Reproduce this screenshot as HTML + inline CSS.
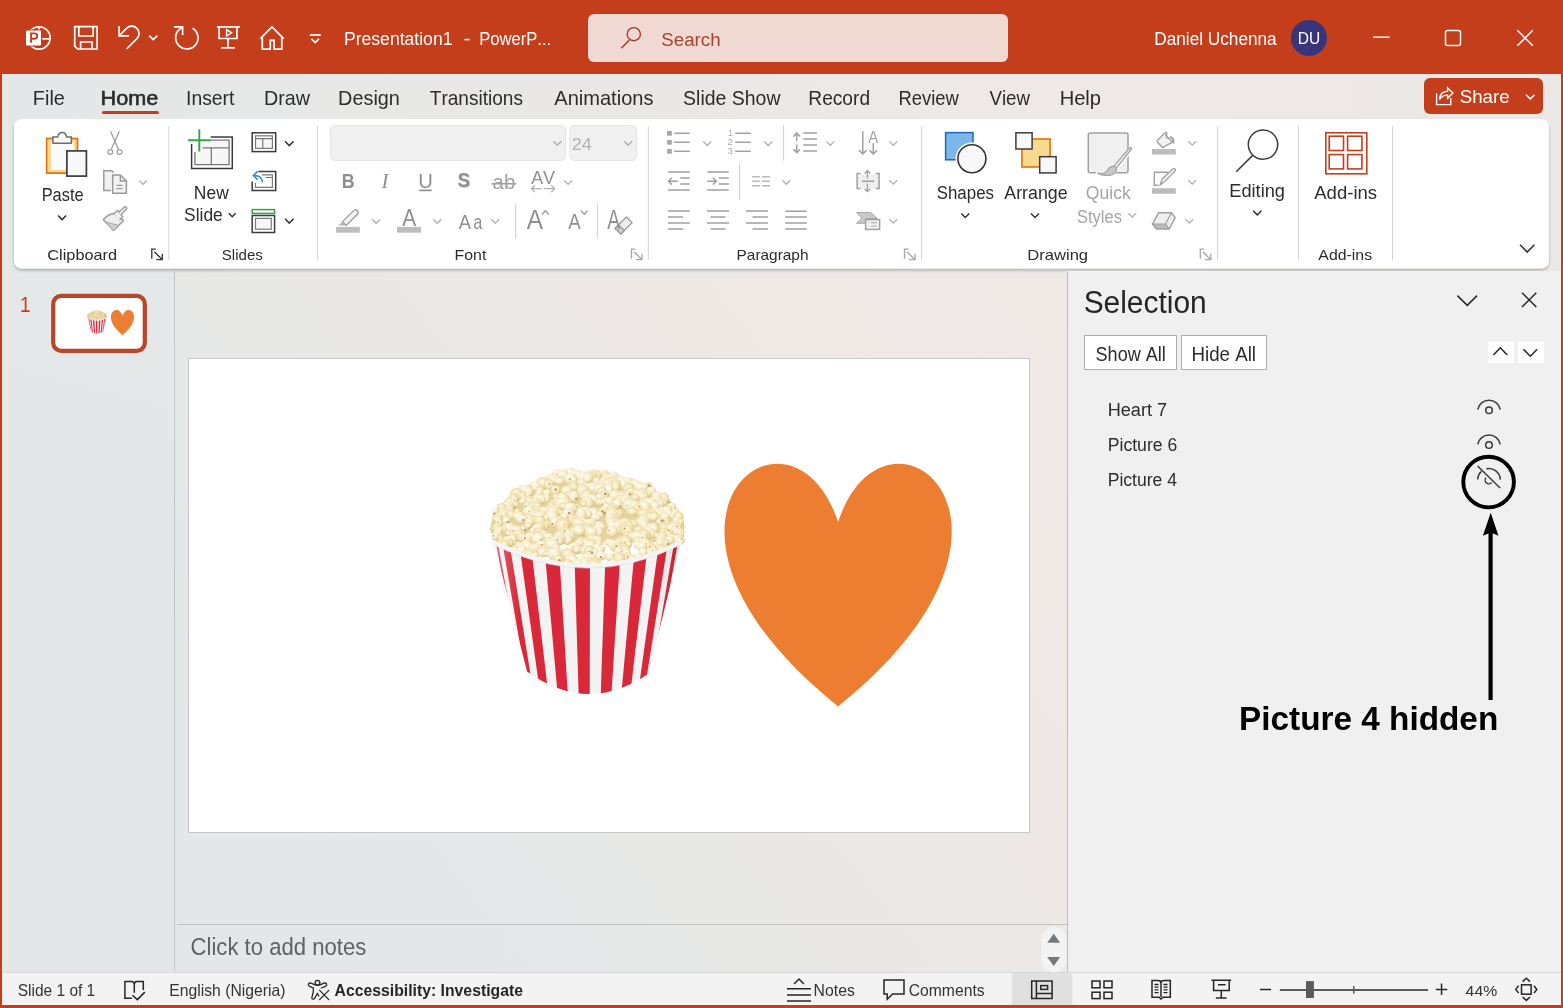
<!DOCTYPE html>
<html><head><meta charset="utf-8"><title>PowerPoint</title>
<style>
html,body{margin:0;padding:0;width:1563px;height:1008px;overflow:hidden;background:#C43E1C}
svg{position:absolute;left:0;top:0;display:block;will-change:transform}
text{font-family:"Liberation Sans",sans-serif;font-kerning:none;white-space:pre}
</style></head><body>
<svg width="1563" height="1008" viewBox="0 0 1563 1008">
<defs>
<linearGradient id="mica" gradientUnits="userSpaceOnUse" x1="176" y1="972" x2="1068" y2="272">
 <stop offset="0" stop-color="#E3E7E8"/><stop offset="0.3" stop-color="#E5E8E8"/><stop offset="0.5" stop-color="#EAE8E5"/><stop offset="0.7" stop-color="#EEE8E5"/><stop offset="1" stop-color="#F1E9E7"/>
</linearGradient>
<linearGradient id="micaL" gradientUnits="userSpaceOnUse" x1="0" y1="972" x2="174" y2="272">
 <stop offset="0" stop-color="#E3E7E8"/><stop offset="1" stop-color="#E5E8E8"/>
</linearGradient>
<linearGradient id="micaT" gradientUnits="userSpaceOnUse" x1="0" y1="0" x2="1563" y2="0">
 <stop offset="0" stop-color="#E4E7E8"/><stop offset="0.35" stop-color="#E9E8E6"/><stop offset="0.7" stop-color="#EEE9E6"/><stop offset="1" stop-color="#ECE8E5"/>
</linearGradient>
<filter id="rshadow" x="-2%" y="-10%" width="104%" height="125%">
 <feGaussianBlur in="SourceAlpha" stdDeviation="1.5"/><feOffset dy="1.5"/>
 <feComponentTransfer><feFuncA type="linear" slope="0.25"/></feComponentTransfer>
 <feMerge><feMergeNode/><feMergeNode in="SourceGraphic"/></feMerge>
</filter>
</defs>
<rect x="0" y="0" width="1563" height="1008" fill="#C43E1C"/>
<rect x="2" y="74" width="1559" height="200" fill="url(#micaT)"/>
<rect x="2" y="271" width="173" height="702" fill="url(#micaL)"/>
<rect x="175" y="271" width="893" height="702" fill="url(#mica)"/>
<rect x="14" y="119" width="1535" height="149.5" rx="8" fill="#FFFFFF" filter="url(#rshadow)"/>
<rect x="1068" y="271" width="493" height="701" fill="#F0F0F0"/>
<line x1="1067.5" y1="272" x2="1067.5" y2="972" stroke="#BDBDBD" stroke-width="1"/>
<line x1="174.5" y1="271" x2="174.5" y2="971" stroke="#C4C4C4" stroke-width="1"/>
<line x1="177" y1="924.5" x2="1067" y2="924.5" stroke="#C0C0C0" stroke-width="1"/>
<rect x="188.5" y="358.5" width="841" height="474" fill="#FFFFFF" stroke="#C8C8C8" stroke-width="1"/>
<rect x="2" y="973" width="1559" height="32" fill="#F3F3F3"/>
<line x1="2" y1="972.5" x2="1561" y2="972.5" stroke="#D9D9D9" stroke-width="1"/>
<g fill="none" stroke="#FFFFFF" stroke-width="1.6" stroke-linecap="butt" stroke-linejoin="miter">
<circle cx="39" cy="37.9" r="11.2"/>
<line x1="38.9" y1="27" x2="38.9" y2="31"/><line x1="41" y1="38.85" x2="49.5" y2="38.85"/>
</g>
<rect x="25.2" y="29.6" width="17" height="17" rx="1.5" fill="#C43E1C"/>
<rect x="26" y="30.4" width="15" height="15.2" rx="1" fill="#FFFFFF"/>
<path d="M31.1 42.7 V33.4 H34.3 Q37.2 33.4 37.2 36 Q37.2 38.8 34.3 38.8 H31.1" fill="none" stroke="#C43E1C" stroke-width="1.9"/>
<g fill="none" stroke="#FFFFFF" stroke-width="1.7" stroke-linecap="butt" stroke-linejoin="miter">
<path d="M74.7 26.7 H97.1 V49 H77.6 L74.7 46.1 Z"/>
<path d="M78.8 26.7 V36 H93.1 V26.7"/>
<path d="M80.6 49 V42 H92 V49"/>
<path d="M119.1 26 V35.8 H129"/>
<path d="M119.4 35.5 L126.5 28.3 A7.3 7.3 0 0 1 136.9 38.7 L126.6 49"/>
<path d="M149.2 35.6 L153.2 39.6 L157.2 35.6"/>
<path d="M192.6 28.2 A11.2 11.2 0 1 1 178.6 30.2 L182.3 27.1"/>
<path d="M173.9 26.8 H182.6 V35"/>
<path d="M216.9 26.9 H239.9"/><path d="M219.1 26.9 V38.5 H236.9 V26.9"/><path d="M228 38.5 V47.6"/><path d="M221.1 47.8 H235"/>
<path d="M226.6 29.6 V36 L231.6 32.8 Z" stroke-width="1.4"/>
<path d="M260.3 38.6 L272 26.9 L283.7 38.6"/><path d="M262.3 37 V49.1 H270.3 V40.4 H274.1 V49.1 H281.8 V37"/>
<path d="M309.8 35 H320.9"/><path d="M311.4 38.9 L315.2 42.6 L319 38.9"/>
</g>
<rect x="588" y="14" width="420" height="48" rx="6" fill="#F0D9D3"/>
<g fill="none" stroke="#A63B20" stroke-width="1.4"><circle cx="633.8" cy="34.2" r="6.6"/><path d="M629.3 39.9 L621.3 48.3"/></g>
<circle cx="1309" cy="38" r="18" fill="#39357A"/>
<g fill="none" stroke="#FFFFFF" stroke-width="1.5"><path d="M1373 37.2 H1389.5"/><rect x="1445.5" y="30.6" width="15" height="15" rx="2"/><path d="M1517.3 30.3 L1532.8 45.8 M1532.8 30.3 L1517.3 45.8"/></g>
<rect x="1424" y="78" width="119" height="36" rx="6" fill="#C43E1C"/>
<g fill="none" stroke="#FFFFFF" stroke-width="1.4" stroke-linejoin="miter"><path d="M1436.6 93.5 V104.6 H1450.7 V98"/><path d="M1439.6 99.5 Q1440 91.5 1447.6 91.3 V87.8 L1452.9 93 L1447.6 98.3 V95.1 Q1442.5 94.8 1439.6 99.5 Z"/><path d="M1526 94.7 L1530.3 98.9 L1534.6 94.7" stroke-width="1.5"/></g>
<rect x="49.3" y="140.2" width="26.4" height="31.2" fill="#FAFAFA" stroke="#F8D88C" stroke-width="3.2"/>
<rect x="46.7" y="138.5" width="30.8" height="34.6" fill="none" stroke="#E0720E" stroke-width="1.7"/>
<path d="M52.9 136.9 H57.7 Q58.6 132.4 62.2 132.4 Q65.8 132.4 66.7 136.9 H71.3 V143.3 H52.9 Z" fill="#FAFAFA" stroke="#6E6E6E" stroke-width="1.5"/>
<rect x="66.9" y="150.9" width="19.5" height="25.2" fill="#F8F8F8" stroke="#3C3C3C" stroke-width="1.7"/>
<path d="M58 215.5 L62.1 219.6 L66.2 215.5" fill="none" stroke="#333" stroke-width="1.5"/>
<g fill="none" stroke="#A0A0A0" stroke-width="1.3"><path d="M110.6 131.3 L118.3 149.2 M119.3 131.3 L111.3 149.2"/><circle cx="110.3" cy="152" r="2.4"/><circle cx="119.5" cy="152" r="2.4"/></g>
<g fill="#F2F2F2" stroke="#9A9A9A" stroke-width="1.5"><path d="M111 190.4 H103.8 V170.7 H111.5 L113.6 172.4" fill="#F2F2F2"/><path d="M112.7 175 H120.4 L126.4 181 V193.2 H112.7 Z"/><path d="M120.4 175 V181 H126.4" fill="none"/><path d="M116.4 185.4 H122.6 M116.4 188.6 H122.6" stroke-width="1.2"/></g>
<path d="M139.3 180.5 L143.1 184.3 L146.9 180.5" fill="none" stroke="#B3B3B3" stroke-width="1.3"/>
<g stroke="#9A9A9A" stroke-width="1.4" stroke-linejoin="round"><path d="M103.3 219.5 Q108 214.5 113.4 213.5 L123.6 220.4 L113.5 230.6 Z" fill="#EFEFEF"/><path d="M105.5 222 L118.6 225.3 L113.5 230.6 Z" fill="#D0D0D0" stroke-width="0.8"/><path d="M113.8 213.8 L117.4 210.4 L122.8 216.6 L119.6 220" fill="#EFEFEF"/><path d="M118.5 212.5 L124.5 206.9 Q126.4 206.3 126.8 208.5 L121 214.7" fill="#F5F5F5"/></g>
<g fill="none" stroke="#333" stroke-width="1.3"><path d="M151.8 258.7 V249.2 H155.8"/><path d="M154.3 251.7 L162.3 259.7 M156.3 259.7 H162.3 V253.7"/></g>
<g fill="none" stroke="#A6A6A6" stroke-width="1.3"><path d="M631.5 258.7 V249.2 H635.5"/><path d="M634.0 251.7 L642.0 259.7 M636.0 259.7 H642.0 V253.7"/></g>
<g fill="none" stroke="#A6A6A6" stroke-width="1.3"><path d="M904.5 258.7 V249.2 H908.5"/><path d="M907.0 251.7 L915.0 259.7 M909.0 259.7 H915.0 V253.7"/></g>
<g fill="none" stroke="#A6A6A6" stroke-width="1.3"><path d="M1200.3 258.7 V249.2 H1204.3"/><path d="M1202.8 251.7 L1210.8 259.7 M1204.8 259.7 H1210.8 V253.7"/></g>
<line x1="168.8" y1="126" x2="168.8" y2="260" stroke="#D4D4D4" stroke-width="1"/>
<line x1="317.3" y1="126" x2="317.3" y2="260" stroke="#D4D4D4" stroke-width="1"/>
<line x1="648.3" y1="126" x2="648.3" y2="260" stroke="#D4D4D4" stroke-width="1"/>
<line x1="921.6" y1="126" x2="921.6" y2="260" stroke="#D4D4D4" stroke-width="1"/>
<line x1="1217.6" y1="126" x2="1217.6" y2="260" stroke="#D4D4D4" stroke-width="1"/>
<line x1="1298.5" y1="126" x2="1298.5" y2="260" stroke="#D4D4D4" stroke-width="1"/>
<line x1="1392.5" y1="126" x2="1392.5" y2="260" stroke="#D4D4D4" stroke-width="1"/>
<g fill="none" stroke-linejoin="miter">
<rect x="194.9" y="140.2" width="34.2" height="24.5" fill="#F7F7F7" stroke="none"/>
<path d="M210.7 136.9 H232.3 V168.6 H191.6 V144" stroke="#3C3C3C" stroke-width="1.5"/>
<path d="M210.7 140.2 H229.1 V164.7 H194.9 V152 M202.6 147.8 H229.1 M211.3 147.8 V164.7" stroke="#7A7A7A" stroke-width="1.3"/>
<path d="M199.3 129.3 V151.6 M188.1 140.2 H210.7" stroke="#3AA04C" stroke-width="1.9"/>
<rect x="252.2" y="132.8" width="23.5" height="18.8" stroke="#3C3C3C" stroke-width="1.5"/>
<rect x="255.5" y="135.8" width="16.9" height="12.6" fill="#F7F7F7" stroke="#7A7A7A" stroke-width="1.2"/><path d="M255.5 138.6 H272.4 M262.8 138.6 V148.4" stroke="#7A7A7A" stroke-width="1.2"/>
<path d="M258.5 171.6 H275.7 V190.4 H252.2 V181.5" stroke="#3C3C3C" stroke-width="1.5"/>
<path d="M262 174.8 H272.4 V187.4 H255.5 V183 M265.5 177.5 H272.4" stroke="#7A7A7A" stroke-width="1.2"/>
<path d="M262.5 182.5 Q262.3 175.6 254 175.5 M257.8 171.2 L253.4 175.5 L257.6 179.8" stroke="#2E8FD6" stroke-width="1.6"/>
<rect x="252.2" y="209.6" width="22.4" height="3.8" stroke="#3AA04C" stroke-width="1.5"/>
<path d="M252.2 215.5 H274.6 V232.4 H252.2 Z" stroke="#3C3C3C" stroke-width="1.5"/>
<rect x="255.5" y="218.4" width="15.8" height="10.8" fill="#F7F7F7" stroke="#7A7A7A" stroke-width="1.2"/>
<g stroke="#333" stroke-width="1.5"><path d="M285 141.3 L289.3 145.6 L293.6 141.3"/><path d="M285 218.8 L289.3 223.1 L293.6 218.8"/><path d="M228.8 213.3 L232.2 216.7 L235.7 213.3"/></g>
</g>
<rect x="330.5" y="125.5" width="235" height="35" rx="5" fill="#F0F0F0" stroke="#E3E3E3" stroke-width="1"/>
<rect x="569.8" y="125.5" width="67" height="35" rx="5" fill="#F0F0F0" stroke="#E3E3E3" stroke-width="1"/>
<path d="M553.3 141.2 L557.3 145.2 L561.3 141.2" fill="none" stroke="#A6A6A6" stroke-width="1.3"/>
<path d="M624.2 141.2 L628.2 145.2 L632.2 141.2" fill="none" stroke="#A6A6A6" stroke-width="1.3"/>
<g fill="#8F8F8F" style="font-family:'Liberation Sans'">
</g>
<path d="M419.2 190.4 H431.8" stroke="#8F8F8F" stroke-width="1.6"/>
<path d="M491.5 183.8 H516.2" stroke="#8F8F8F" stroke-width="1.3"/>
<g fill="none" stroke="#B0B0B0" stroke-width="1.3"><path d="M531.5 188.7 H541.6 M534.8 185.3 L531.5 188.7 L534.8 192.1"/><path d="M544.1 188.7 H554.6 M551.3 185.3 L554.6 188.7 L551.3 192.1"/></g>
<path d="M564.2 180.4 L568.2 184.4 L572.2 180.4" fill="none" stroke="#B0B0B0" stroke-width="1.3"/>
<rect x="336.1" y="226.9" width="23.7" height="5.8" fill="#BDBDBD"/>
<path d="M342.5 221.6 L353.3 210.9 Q355.5 208.7 357.3 210.6 Q359.2 212.6 357 214.8 L346.3 225.4 Z" fill="#F2F2F2" stroke="#9A9A9A" stroke-width="1.3"/>
<path d="M342.5 221.6 L346.3 225.4 L343.4 225.6 L338.3 225.6 Z" fill="#B5B5B5"/>
<path d="M372.2 219.3 L376.2 223.3 L380.2 219.3" fill="none" stroke="#B0B0B0" stroke-width="1.3"/>
<rect x="397" y="226.9" width="24" height="5.8" fill="#BDBDBD"/>
<path d="M433.3 219.3 L437.3 223.3 L441.3 219.3" fill="none" stroke="#B0B0B0" stroke-width="1.3"/>
<path d="M491.3 219.3 L495.3 223.3 L499.3 219.3" fill="none" stroke="#B0B0B0" stroke-width="1.3"/>
<line x1="515.7" y1="203.3" x2="515.7" y2="238.6" stroke="#D0D0D0" stroke-width="1"/>
<line x1="597.4" y1="203.3" x2="597.4" y2="238.6" stroke="#D0D0D0" stroke-width="1"/>
<g fill="none" stroke="#9A9A9A" stroke-width="1.3"><path d="M541.9 214.5 L545.3 210.8 L548.7 214.5"/><path d="M580.9 210.6 L584.3 214.3 L587.7 210.6"/></g>
<g transform="translate(623.6 225.5) rotate(-45)"><rect x="-8" y="-4" width="16" height="8" fill="#EDEDED" stroke="#A0A0A0" stroke-width="1.4"/><rect x="-8" y="-4" width="5" height="8" fill="#CFCFCF" stroke="#A0A0A0" stroke-width="1.4"/></g>
<g fill="none" stroke="#A0A0A0" stroke-width="1.5">
<rect x="667.1" y="131.0" width="4.7" height="4.7" fill="#A6A6A6" stroke="none"/><path d="M674.2 133.3 H689.8"/>
<rect x="667.1" y="140.0" width="4.7" height="4.7" fill="#A6A6A6" stroke="none"/><path d="M674.2 142.3 H689.8"/>
<rect x="667.1" y="149.0" width="4.7" height="4.7" fill="#A6A6A6" stroke="none"/><path d="M674.2 151.3 H689.8"/>
<path d="M703.3 141.5 L707.3 145.5 L711.3 141.5" fill="none" stroke="#B0B0B0" stroke-width="1.3"/>
<path d="M735.2 133.3 H750.8"/>
<path d="M735.2 142.3 H750.8"/>
<path d="M735.2 151.3 H750.8"/>
<path d="M764.2 141.5 L768.2 145.5 L772.2 141.5" fill="none" stroke="#B0B0B0" stroke-width="1.3"/>
<line x1="783.6" y1="125" x2="783.6" y2="160.7" stroke="#D0D0D0" stroke-width="1"/>
<path d="M796.7 133.5 V141.2 M793.4 136.6 L796.7 133.2 L800 136.6 M796.7 144.6 V152.4 M793.4 149.2 L796.7 152.6 L800 149.2"/>
<path d="M803.3 133.1 H816.9 M803.3 139.1 H816.9 M803.3 145.1 H816.9 M803.3 151 H816.9"/>
<path d="M826.4 141.4 L830.3 145.3 L834.1999999999999 141.4" fill="none" stroke="#B0B0B0" stroke-width="1.3"/>
<path d="M862.8 131.2 V154 M858.9 150.1 L862.8 154 L866.7 150.1 M873.3 143 V154 M869.6 150.4 L873.3 154 L877 150.4"/>
<path d="M889.4 141.4 L893.3 145.3 L897.1999999999999 141.4" fill="none" stroke="#B0B0B0" stroke-width="1.3"/>
<path d="M668 172.1 H689.8 M680.3 178.1 H689.8 M680.3 184.1 H689.8 M668 190 H689.8 M668.6 181.2 H677.7 M671.9 177.8 L668.5 181.2 L671.9 184.6"/>
<path d="M707.2 172.1 H728.7 M718.7 178.1 H728.7 M718.7 184.1 H728.7 M707.2 190 H728.7 M707.2 181.2 H716.3 M712.9 177.8 L716.3 181.2 L712.9 184.6"/>
<line x1="739.5" y1="164" x2="739.5" y2="200" stroke="#D0D0D0" stroke-width="1"/>
<path d="M752.1 176.8 H759.8 M762.1 176.8 H770 M752.1 181.2 H759.8 M762.1 181.2 H770 M752.1 185.8 H759.8 M762.1 185.8 H770" stroke="#B8B8B8"/>
<path d="M782.3 180.3 L786.3 184.3 L790.3 180.3" fill="none" stroke="#B0B0B0" stroke-width="1.3"/>
<rect x="857.5" y="174.5" width="21.5" height="14" fill="#EFEFEF" stroke="none"/>
<path d="M860.5 173.5 H857.1 V188.6 H860.5 M875.7 173.5 H879.1 V188.6 H875.7 M862 181.2 H874"/>
<path d="M867.4 170.8 V178.5 M864.6 173.5 L867.4 170.7 L870.2 173.5 M867.4 183.5 V191.5 M864.6 188.8 L867.4 191.6 L870.2 188.8" stroke-width="1.3"/>
<path d="M889.4 180.3 L893.3 184.20000000000002 L897.1999999999999 180.3" fill="none" stroke="#B0B0B0" stroke-width="1.3"/>
<path d="M667.8 211 H689.8 M667.8 217 H683 M667.8 223 H689.8 M667.8 229 H683"/>
<path d="M707 211 H729 M710.5 217 H725.5 M707 223 H729 M710.5 229 H725.5"/>
<path d="M746 211 H768 M752.5 217 H768 M746 223 H768 M752.5 229 H768"/>
<path d="M785.3 211.2 H806.7 M785.3 217.1 H806.7 M785.3 223.1 H806.7 M785.3 229 H806.7"/>
<path d="M856.5 212.5 H870.5 L877.5 218.5 H866 V223.3 H856.5 L862 218 Z" fill="#C9C9C9" stroke="#A8A8A8" stroke-width="1"/>
<rect x="865.6" y="219.6" width="14" height="9.8" fill="#F5F5F5" stroke="#A0A0A0" stroke-width="1.5"/>
<path d="M868.3 222.8 H869.3 M868.3 226 H869.3 M871 222.8 H877 M871 226 H877" stroke-width="1.1"/>
<path d="M889.4 219.3 L893.3 223.20000000000002 L897.1999999999999 219.3" fill="none" stroke="#B0B0B0" stroke-width="1.3"/>
</g>
<rect x="945.6" y="132.6" width="27.4" height="27.2" fill="#7DB6E8" stroke="#1868C2" stroke-width="1.5"/>
<circle cx="971.9" cy="158.7" r="16.3" fill="#FFFFFF"/>
<circle cx="971.9" cy="158.7" r="14" fill="#F8F8F8" stroke="#333333" stroke-width="1.6"/>
<rect x="1021.9" y="139" width="28.2" height="28" fill="#F7DA8E" stroke="#E0720E" stroke-width="1.6"/>
<rect x="1015.9" y="132.8" width="16.2" height="16.2" fill="#F8F8F8" stroke="#3C3C3C" stroke-width="1.5"/>
<rect x="1039.7" y="156.7" width="16.4" height="16.2" fill="#F8F8F8" stroke="#3C3C3C" stroke-width="1.5"/>
<path d="M961.3 213.5 L965.3 217.5 L969.3 213.5" fill="none" stroke="#333333" stroke-width="1.5"/>
<path d="M1031 213.5 L1035 217.5 L1039 213.5" fill="none" stroke="#333333" stroke-width="1.5"/>
<rect x="1088.3" y="133" width="39.7" height="39.7" rx="2" fill="#F0F0F0" stroke="#A0A0A0" stroke-width="1.5"/>
<path d="M1096 173.5 Q1104 175 1108 169 Q1110 165 1114.5 165.5 L1131.8 147.2 Q1134 147 1131.4 150.3 L1116.3 168.7 Q1115 175 1107 176 Q1100 176.5 1096 173.5 Z" fill="#FFFFFF" stroke="#FFFFFF" stroke-width="3"/>
<path d="M1113.6 166.4 L1128.8 148.8 Q1131.5 146.5 1131.4 149.2 L1116.5 167.9" fill="#F2F2F2" stroke="#A0A0A0" stroke-width="1.3"/>
<path d="M1097.5 173.2 Q1104.5 174.6 1107.8 169.5 Q1110.2 165.6 1113.8 166.3 Q1117.5 167.5 1116 171.5 Q1113.5 175.6 1106.6 175.4 Q1101 175.3 1097.5 173.2 Z" fill="#C8C8C8" stroke="#A0A0A0" stroke-width="1.2"/>
<path d="M1128.4 213.1 L1132.3000000000002 217.0 L1136.2 213.1" fill="none" stroke="#B0B0B0" stroke-width="1.3"/>
<path d="M1156.8 141 L1164.5 133.3 Q1167 131.3 1166.7 134 V138.5 M1165.2 134.8 L1172.5 142 L1162.5 147.6 L1156.8 141.6" fill="#F2F2F2" stroke="#A0A0A0" stroke-width="1.4"/>
<path d="M1170 137 Q1174 137.5 1173.5 143.5" fill="none" stroke="#A0A0A0" stroke-width="2"/>
<rect x="1152" y="149" width="23.8" height="5.6" fill="#BDBDBD"/>
<path d="M1188.3 141.3 L1192.2 145.20000000000002 L1196.1 141.3" fill="none" stroke="#B0B0B0" stroke-width="1.3"/>
<path d="M1167.8 172.3 H1154.3 V185.2 H1158.5" fill="none" stroke="#A0A0A0" stroke-width="1.4"/>
<path d="M1160.2 185 L1162 179.2 L1172.2 169.2 Q1174.8 167.6 1175.6 170.4 L1165.5 180.8 Z" fill="#F2F2F2" stroke="#A0A0A0" stroke-width="1.3"/>
<rect x="1152" y="188.2" width="23.8" height="5.6" fill="#BDBDBD"/>
<path d="M1188.3 180.2 L1192.2 184.1 L1196.1 180.2" fill="none" stroke="#B0B0B0" stroke-width="1.3"/>
<path d="M1158.5 212.8 H1171.4 L1175.2 217.6 L1169.3 228.8 H1156.5 L1152.6 224 Z" fill="#EFEFEF" stroke="#A0A0A0" stroke-width="1.4"/>
<path d="M1152.6 224 H1165.6 L1169.3 228.8 H1156.5 Z" fill="#BDBDBD" stroke="#A0A0A0" stroke-width="1.2"/><path d="M1165.6 224 L1171.4 212.8" stroke="#A0A0A0" stroke-width="1.2"/>
<path d="M1185.4 219.1 L1189.3000000000002 223.0 L1193.2 219.1" fill="none" stroke="#B0B0B0" stroke-width="1.3"/>
<g fill="none" stroke="#3C3C3C" stroke-width="1.5"><circle cx="1263" cy="144.6" r="14.7"/><path d="M1252.4 155.6 L1236.2 171.8"/></g>
<path d="M1253.2 210.8 L1257.3 214.9 L1261.4 210.8" fill="none" stroke="#333333" stroke-width="1.5"/>
<g fill="none" stroke="#C43E1C" stroke-width="1.6"><rect x="1325.8" y="132.8" width="41" height="41"/><rect x="1329.2" y="136.2" width="14.3" height="14.3"/><rect x="1347.6" y="136.2" width="14.3" height="14.3"/><rect x="1329.2" y="154.6" width="14.3" height="14.3"/><rect x="1347.6" y="154.6" width="14.3" height="14.3"/></g>
<path d="M1520 244.8 L1527.2 252.0 L1534.4 244.8" fill="none" stroke="#333333" stroke-width="1.6"/>
<defs><g id="slide"><path d="M838.1 521.7 C885.1 378.4 1068.4 521.7 838.1 706 C607.8 521.7 791.1 378.4 838.1 521.7 Z" fill="#ED7D31"/>
<radialGradient id="pc" cx="0.4" cy="0.35" r="0.75"><stop offset="0" stop-color="#FFFFF6"/><stop offset="0.5" stop-color="#F6EBC8"/><stop offset="1" stop-color="#D2B46E"/></radialGradient>
<radialGradient id="pc2" cx="0.45" cy="0.4" r="0.75"><stop offset="0" stop-color="#FFFBEA"/><stop offset="0.55" stop-color="#F0DEA8"/><stop offset="1" stop-color="#C29A50"/></radialGradient>
<path d="M494 542 L490 528 L494 512 L505 500 L516 490 L530 484 L545 478 L556 471 L570 469 L585 472 L600 470 L615 474 L630 478 L645 483 L658 492 L670 500 L680 512 L685 526 L681 542 Z" fill="#E6D59F"/>
<ellipse cx="567.8" cy="471.8" rx="4.9" ry="4.2" fill="url(#pc)"/>
<ellipse cx="570.5" cy="472.2" rx="6.0" ry="5.3" fill="url(#pc)"/>
<ellipse cx="592.5" cy="473.9" rx="6.6" ry="4.8" fill="url(#pc2)"/>
<ellipse cx="557.5" cy="474.0" rx="5.7" ry="5.5" fill="url(#pc)"/>
<circle cx="557.3" cy="474.0" r="1.2" fill="#A67A38" opacity="0.75"/>
<ellipse cx="562.8" cy="474.1" rx="6.2" ry="4.2" fill="url(#pc)"/>
<ellipse cx="603.8" cy="474.5" rx="5.4" ry="5.5" fill="url(#pc)"/>
<circle cx="601.8" cy="475.7" r="1.1" fill="#A67A38" opacity="0.75"/>
<ellipse cx="596.6" cy="475.3" rx="5.0" ry="5.5" fill="url(#pc2)"/>
<ellipse cx="582.2" cy="475.4" rx="3.9" ry="4.1" fill="url(#pc2)"/>
<circle cx="584.4" cy="478.1" r="1.3" fill="#A67A38" opacity="0.75"/>
<ellipse cx="576.4" cy="475.5" rx="6.4" ry="6.2" fill="url(#pc)"/>
<ellipse cx="590.3" cy="475.7" rx="7.4" ry="5.5" fill="url(#pc)"/>
<ellipse cx="586.2" cy="475.8" rx="6.5" ry="5.0" fill="url(#pc)"/>
<circle cx="586.3" cy="475.2" r="1.2" fill="#A67A38" opacity="0.75"/>
<ellipse cx="579.6" cy="476.2" rx="6.1" ry="4.9" fill="url(#pc)"/>
<circle cx="579.3" cy="476.9" r="1.0" fill="#A67A38" opacity="0.75"/>
<ellipse cx="605.9" cy="476.2" rx="4.5" ry="5.4" fill="url(#pc2)"/>
<circle cx="608.8" cy="476.8" r="1.0" fill="#A67A38" opacity="0.75"/>
<ellipse cx="582.8" cy="476.4" rx="5.7" ry="5.2" fill="url(#pc)"/>
<ellipse cx="613.5" cy="476.7" rx="5.1" ry="5.9" fill="url(#pc)"/>
<ellipse cx="590.8" cy="477.1" rx="4.8" ry="5.1" fill="url(#pc2)"/>
<circle cx="588.5" cy="476.6" r="1.4" fill="#A67A38" opacity="0.75"/>
<ellipse cx="568.6" cy="477.5" rx="6.0" ry="4.0" fill="url(#pc)"/>
<ellipse cx="550.1" cy="477.6" rx="5.5" ry="4.7" fill="url(#pc)"/>
<ellipse cx="587.8" cy="477.8" rx="5.4" ry="5.2" fill="url(#pc)"/>
<ellipse cx="608.6" cy="478.8" rx="4.9" ry="4.3" fill="url(#pc2)"/>
<ellipse cx="570.7" cy="478.8" rx="6.2" ry="6.5" fill="url(#pc)"/>
<circle cx="569.9" cy="478.9" r="1.0" fill="#A67A38" opacity="0.75"/>
<ellipse cx="550.1" cy="478.9" rx="4.0" ry="3.6" fill="url(#pc)"/>
<circle cx="552.1" cy="477.2" r="1.1" fill="#A67A38" opacity="0.75"/>
<ellipse cx="617.7" cy="479.2" rx="4.9" ry="4.2" fill="url(#pc)"/>
<circle cx="616.9" cy="478.8" r="1.0" fill="#A67A38" opacity="0.75"/>
<ellipse cx="554.6" cy="479.6" rx="6.5" ry="5.3" fill="url(#pc)"/>
<circle cx="554.1" cy="482.4" r="0.7" fill="#A67A38" opacity="0.75"/>
<ellipse cx="552.8" cy="479.6" rx="5.2" ry="3.8" fill="url(#pc)"/>
<ellipse cx="573.9" cy="479.8" rx="3.1" ry="3.1" fill="url(#pc)"/>
<ellipse cx="614.4" cy="480.1" rx="5.7" ry="5.2" fill="url(#pc)"/>
<ellipse cx="595.7" cy="480.1" rx="3.0" ry="2.9" fill="url(#pc)"/>
<circle cx="597.5" cy="480.3" r="1.3" fill="#A67A38" opacity="0.75"/>
<ellipse cx="596.9" cy="480.3" rx="3.0" ry="3.2" fill="url(#pc)"/>
<circle cx="599.8" cy="482.5" r="0.9" fill="#A67A38" opacity="0.75"/>
<ellipse cx="608.7" cy="480.5" rx="7.7" ry="6.7" fill="url(#pc)"/>
<ellipse cx="559.8" cy="480.8" rx="5.4" ry="3.7" fill="url(#pc)"/>
<ellipse cx="621.6" cy="481.0" rx="6.5" ry="5.2" fill="url(#pc)"/>
<circle cx="624.2" cy="482.8" r="1.1" fill="#A67A38" opacity="0.75"/>
<ellipse cx="631.1" cy="481.5" rx="4.9" ry="3.9" fill="url(#pc)"/>
<ellipse cx="546.1" cy="481.8" rx="4.5" ry="3.0" fill="url(#pc2)"/>
<ellipse cx="626.8" cy="481.8" rx="6.8" ry="5.3" fill="url(#pc)"/>
<ellipse cx="545.8" cy="481.9" rx="5.5" ry="5.5" fill="url(#pc)"/>
<ellipse cx="604.5" cy="482.1" rx="5.3" ry="6.3" fill="url(#pc)"/>
<ellipse cx="615.9" cy="482.2" rx="3.8" ry="3.5" fill="url(#pc)"/>
<ellipse cx="608.2" cy="482.3" rx="5.8" ry="5.8" fill="url(#pc2)"/>
<circle cx="607.7" cy="482.9" r="1.3" fill="#A67A38" opacity="0.75"/>
<ellipse cx="542.6" cy="482.8" rx="4.9" ry="3.8" fill="url(#pc)"/>
<circle cx="542.2" cy="482.7" r="1.2" fill="#A67A38" opacity="0.75"/>
<ellipse cx="542.5" cy="483.0" rx="6.6" ry="6.4" fill="url(#pc2)"/>
<ellipse cx="548.8" cy="484.3" rx="5.1" ry="5.9" fill="url(#pc2)"/>
<circle cx="549.3" cy="483.4" r="0.9" fill="#A67A38" opacity="0.75"/>
<ellipse cx="614.0" cy="484.5" rx="6.5" ry="6.4" fill="url(#pc)"/>
<ellipse cx="623.5" cy="484.6" rx="5.4" ry="5.2" fill="url(#pc)"/>
<ellipse cx="634.5" cy="484.8" rx="5.3" ry="5.6" fill="url(#pc)"/>
<ellipse cx="607.3" cy="485.1" rx="5.0" ry="4.6" fill="url(#pc2)"/>
<ellipse cx="593.2" cy="485.2" rx="4.4" ry="3.8" fill="url(#pc)"/>
<ellipse cx="601.4" cy="485.3" rx="5.0" ry="4.0" fill="url(#pc)"/>
<ellipse cx="636.2" cy="485.4" rx="6.3" ry="5.4" fill="url(#pc)"/>
<ellipse cx="581.1" cy="485.4" rx="6.2" ry="6.7" fill="url(#pc)"/>
<circle cx="580.0" cy="487.6" r="0.7" fill="#A67A38" opacity="0.75"/>
<ellipse cx="614.4" cy="485.4" rx="7.1" ry="6.4" fill="url(#pc2)"/>
<ellipse cx="606.9" cy="485.7" rx="7.5" ry="6.2" fill="url(#pc)"/>
<ellipse cx="639.9" cy="486.0" rx="4.2" ry="3.1" fill="url(#pc)"/>
<circle cx="640.2" cy="487.0" r="0.8" fill="#A67A38" opacity="0.75"/>
<ellipse cx="573.2" cy="486.0" rx="6.2" ry="6.1" fill="url(#pc2)"/>
<ellipse cx="533.4" cy="486.0" rx="4.3" ry="4.7" fill="url(#pc2)"/>
<ellipse cx="600.3" cy="486.1" rx="6.4" ry="5.4" fill="url(#pc)"/>
<circle cx="598.8" cy="484.2" r="1.1" fill="#A67A38" opacity="0.75"/>
<ellipse cx="629.0" cy="486.2" rx="3.7" ry="3.3" fill="url(#pc)"/>
<circle cx="628.9" cy="485.5" r="0.9" fill="#A67A38" opacity="0.75"/>
<ellipse cx="616.0" cy="486.3" rx="4.6" ry="4.7" fill="url(#pc)"/>
<circle cx="618.2" cy="488.6" r="1.1" fill="#A67A38" opacity="0.75"/>
<ellipse cx="535.3" cy="486.4" rx="6.2" ry="5.2" fill="url(#pc)"/>
<ellipse cx="629.4" cy="486.4" rx="4.9" ry="3.7" fill="url(#pc2)"/>
<circle cx="632.0" cy="486.2" r="1.3" fill="#A67A38" opacity="0.75"/>
<ellipse cx="642.2" cy="486.4" rx="3.5" ry="3.1" fill="url(#pc)"/>
<ellipse cx="573.5" cy="486.5" rx="5.4" ry="5.0" fill="url(#pc2)"/>
<ellipse cx="641.0" cy="486.5" rx="6.8" ry="4.5" fill="url(#pc)"/>
<ellipse cx="648.6" cy="486.8" rx="4.1" ry="5.1" fill="url(#pc2)"/>
<circle cx="649.0" cy="485.3" r="1.4" fill="#A67A38" opacity="0.75"/>
<ellipse cx="614.7" cy="486.9" rx="5.5" ry="3.7" fill="url(#pc)"/>
<ellipse cx="644.5" cy="487.0" rx="3.1" ry="3.5" fill="url(#pc)"/>
<ellipse cx="582.1" cy="487.3" rx="5.3" ry="4.6" fill="url(#pc2)"/>
<ellipse cx="588.1" cy="487.3" rx="6.0" ry="4.8" fill="url(#pc)"/>
<ellipse cx="594.4" cy="487.4" rx="6.1" ry="5.0" fill="url(#pc)"/>
<ellipse cx="535.1" cy="487.9" rx="3.2" ry="2.5" fill="url(#pc)"/>
<ellipse cx="592.8" cy="488.2" rx="7.6" ry="5.8" fill="url(#pc)"/>
<circle cx="591.6" cy="487.9" r="1.2" fill="#A67A38" opacity="0.75"/>
<ellipse cx="628.3" cy="488.2" rx="5.9" ry="5.1" fill="url(#pc2)"/>
<ellipse cx="597.2" cy="488.3" rx="4.7" ry="3.0" fill="url(#pc2)"/>
<ellipse cx="593.5" cy="488.3" rx="4.3" ry="3.7" fill="url(#pc)"/>
<ellipse cx="528.2" cy="488.5" rx="3.9" ry="4.3" fill="url(#pc2)"/>
<ellipse cx="521.4" cy="488.9" rx="3.5" ry="4.2" fill="url(#pc)"/>
<ellipse cx="600.9" cy="489.0" rx="4.2" ry="5.2" fill="url(#pc)"/>
<ellipse cx="599.7" cy="489.1" rx="6.3" ry="5.9" fill="url(#pc)"/>
<ellipse cx="608.7" cy="489.2" rx="5.1" ry="6.0" fill="url(#pc)"/>
<ellipse cx="583.4" cy="489.6" rx="5.5" ry="4.9" fill="url(#pc2)"/>
<ellipse cx="582.7" cy="489.8" rx="5.6" ry="4.2" fill="url(#pc)"/>
<ellipse cx="527.7" cy="489.8" rx="3.4" ry="3.5" fill="url(#pc)"/>
<ellipse cx="627.7" cy="489.8" rx="3.8" ry="2.7" fill="url(#pc)"/>
<circle cx="626.2" cy="490.2" r="1.2" fill="#A67A38" opacity="0.75"/>
<ellipse cx="555.4" cy="489.9" rx="4.6" ry="4.9" fill="url(#pc)"/>
<circle cx="555.6" cy="489.2" r="1.3" fill="#A67A38" opacity="0.75"/>
<ellipse cx="570.4" cy="490.0" rx="3.4" ry="3.2" fill="url(#pc)"/>
<ellipse cx="539.6" cy="490.1" rx="4.7" ry="4.3" fill="url(#pc2)"/>
<ellipse cx="567.1" cy="490.1" rx="5.9" ry="4.4" fill="url(#pc)"/>
<circle cx="566.6" cy="493.1" r="1.0" fill="#A67A38" opacity="0.75"/>
<ellipse cx="525.5" cy="490.5" rx="6.9" ry="6.2" fill="url(#pc)"/>
<ellipse cx="651.4" cy="490.7" rx="5.0" ry="4.4" fill="url(#pc)"/>
<ellipse cx="630.9" cy="490.9" rx="4.8" ry="4.2" fill="url(#pc2)"/>
<ellipse cx="601.6" cy="491.6" rx="5.2" ry="5.2" fill="url(#pc2)"/>
<circle cx="601.6" cy="491.5" r="0.7" fill="#A67A38" opacity="0.75"/>
<ellipse cx="642.5" cy="491.8" rx="3.6" ry="3.4" fill="url(#pc2)"/>
<ellipse cx="636.0" cy="491.8" rx="4.7" ry="3.4" fill="url(#pc2)"/>
<ellipse cx="528.4" cy="491.9" rx="5.1" ry="4.8" fill="url(#pc)"/>
<circle cx="526.2" cy="493.3" r="1.3" fill="#A67A38" opacity="0.75"/>
<ellipse cx="516.5" cy="492.3" rx="6.4" ry="4.8" fill="url(#pc2)"/>
<ellipse cx="579.8" cy="492.4" rx="3.1" ry="3.5" fill="url(#pc)"/>
<circle cx="577.9" cy="492.1" r="0.7" fill="#A67A38" opacity="0.75"/>
<ellipse cx="547.0" cy="492.4" rx="4.1" ry="3.7" fill="url(#pc)"/>
<ellipse cx="582.9" cy="493.1" rx="4.4" ry="4.2" fill="url(#pc)"/>
<ellipse cx="611.6" cy="493.3" rx="2.9" ry="2.9" fill="url(#pc2)"/>
<circle cx="610.5" cy="495.1" r="1.3" fill="#A67A38" opacity="0.75"/>
<ellipse cx="647.9" cy="493.5" rx="3.4" ry="3.4" fill="url(#pc)"/>
<ellipse cx="539.2" cy="493.9" rx="3.7" ry="3.4" fill="url(#pc)"/>
<ellipse cx="642.4" cy="493.9" rx="5.7" ry="4.5" fill="url(#pc)"/>
<circle cx="645.0" cy="496.8" r="0.7" fill="#A67A38" opacity="0.75"/>
<ellipse cx="568.3" cy="494.0" rx="3.2" ry="2.6" fill="url(#pc2)"/>
<circle cx="566.3" cy="495.7" r="0.8" fill="#A67A38" opacity="0.75"/>
<ellipse cx="626.3" cy="494.3" rx="3.7" ry="4.2" fill="url(#pc)"/>
<ellipse cx="644.0" cy="494.4" rx="4.4" ry="3.6" fill="url(#pc2)"/>
<circle cx="642.9" cy="492.6" r="0.9" fill="#A67A38" opacity="0.75"/>
<ellipse cx="622.5" cy="494.5" rx="3.3" ry="3.1" fill="url(#pc)"/>
<ellipse cx="626.7" cy="494.5" rx="4.4" ry="4.7" fill="url(#pc)"/>
<ellipse cx="627.8" cy="494.7" rx="4.3" ry="3.7" fill="url(#pc)"/>
<ellipse cx="616.1" cy="494.7" rx="5.3" ry="6.1" fill="url(#pc2)"/>
<ellipse cx="586.0" cy="494.7" rx="4.7" ry="4.9" fill="url(#pc2)"/>
<ellipse cx="604.7" cy="494.7" rx="3.8" ry="4.2" fill="url(#pc)"/>
<circle cx="605.2" cy="493.5" r="1.4" fill="#A67A38" opacity="0.75"/>
<ellipse cx="584.8" cy="494.7" rx="2.8" ry="3.2" fill="url(#pc)"/>
<ellipse cx="641.6" cy="494.9" rx="3.6" ry="3.7" fill="url(#pc)"/>
<ellipse cx="528.0" cy="494.9" rx="2.8" ry="3.2" fill="url(#pc)"/>
<circle cx="528.4" cy="496.1" r="1.0" fill="#A67A38" opacity="0.75"/>
<ellipse cx="614.8" cy="495.1" rx="5.5" ry="4.9" fill="url(#pc)"/>
<ellipse cx="594.3" cy="495.2" rx="3.8" ry="3.7" fill="url(#pc2)"/>
<circle cx="596.1" cy="494.4" r="1.3" fill="#A67A38" opacity="0.75"/>
<ellipse cx="622.3" cy="495.3" rx="4.5" ry="5.1" fill="url(#pc2)"/>
<ellipse cx="621.1" cy="495.4" rx="3.9" ry="4.0" fill="url(#pc)"/>
<ellipse cx="584.5" cy="495.5" rx="5.4" ry="5.9" fill="url(#pc)"/>
<ellipse cx="537.1" cy="495.7" rx="3.1" ry="2.9" fill="url(#pc)"/>
<ellipse cx="518.4" cy="495.7" rx="3.7" ry="3.2" fill="url(#pc2)"/>
<ellipse cx="586.3" cy="495.8" rx="6.9" ry="6.3" fill="url(#pc2)"/>
<ellipse cx="627.2" cy="495.9" rx="4.3" ry="3.2" fill="url(#pc)"/>
<circle cx="629.7" cy="494.0" r="1.1" fill="#A67A38" opacity="0.75"/>
<ellipse cx="657.4" cy="496.2" rx="6.1" ry="5.1" fill="url(#pc)"/>
<ellipse cx="514.7" cy="496.2" rx="4.9" ry="3.6" fill="url(#pc2)"/>
<ellipse cx="640.0" cy="496.3" rx="6.3" ry="5.4" fill="url(#pc)"/>
<ellipse cx="563.0" cy="496.3" rx="3.7" ry="3.3" fill="url(#pc)"/>
<ellipse cx="573.9" cy="496.3" rx="5.3" ry="6.1" fill="url(#pc)"/>
<circle cx="576.1" cy="498.2" r="1.2" fill="#A67A38" opacity="0.75"/>
<ellipse cx="555.5" cy="496.4" rx="3.4" ry="3.4" fill="url(#pc2)"/>
<ellipse cx="521.2" cy="496.6" rx="5.0" ry="4.5" fill="url(#pc)"/>
<circle cx="519.2" cy="498.6" r="0.9" fill="#A67A38" opacity="0.75"/>
<ellipse cx="663.6" cy="496.7" rx="5.2" ry="4.5" fill="url(#pc2)"/>
<ellipse cx="517.1" cy="496.9" rx="3.7" ry="3.3" fill="url(#pc)"/>
<ellipse cx="635.1" cy="497.0" rx="4.8" ry="3.4" fill="url(#pc2)"/>
<ellipse cx="513.6" cy="497.4" rx="4.7" ry="5.3" fill="url(#pc2)"/>
<ellipse cx="541.6" cy="497.5" rx="5.7" ry="4.3" fill="url(#pc2)"/>
<circle cx="541.7" cy="497.9" r="0.7" fill="#A67A38" opacity="0.75"/>
<ellipse cx="619.5" cy="497.5" rx="3.9" ry="3.5" fill="url(#pc2)"/>
<ellipse cx="561.8" cy="497.5" rx="5.1" ry="5.4" fill="url(#pc)"/>
<circle cx="560.8" cy="495.8" r="0.7" fill="#A67A38" opacity="0.75"/>
<ellipse cx="643.8" cy="497.7" rx="4.3" ry="4.4" fill="url(#pc)"/>
<ellipse cx="536.7" cy="497.8" rx="4.0" ry="3.4" fill="url(#pc)"/>
<ellipse cx="528.5" cy="497.9" rx="2.6" ry="2.7" fill="url(#pc2)"/>
<ellipse cx="658.7" cy="498.2" rx="3.2" ry="3.0" fill="url(#pc2)"/>
<ellipse cx="513.8" cy="498.3" rx="4.9" ry="4.9" fill="url(#pc2)"/>
<ellipse cx="546.0" cy="498.4" rx="4.3" ry="4.9" fill="url(#pc)"/>
<circle cx="543.9" cy="499.2" r="0.9" fill="#A67A38" opacity="0.75"/>
<ellipse cx="563.7" cy="498.6" rx="6.6" ry="5.1" fill="url(#pc2)"/>
<ellipse cx="563.0" cy="498.7" rx="6.1" ry="5.0" fill="url(#pc)"/>
<ellipse cx="599.3" cy="498.9" rx="5.9" ry="6.1" fill="url(#pc)"/>
<ellipse cx="540.7" cy="499.4" rx="5.0" ry="5.0" fill="url(#pc)"/>
<ellipse cx="524.3" cy="499.5" rx="3.5" ry="3.6" fill="url(#pc)"/>
<ellipse cx="556.2" cy="500.0" rx="3.3" ry="3.3" fill="url(#pc2)"/>
<ellipse cx="631.6" cy="500.0" rx="2.9" ry="3.4" fill="url(#pc)"/>
<circle cx="628.9" cy="500.4" r="0.7" fill="#A67A38" opacity="0.75"/>
<ellipse cx="666.5" cy="500.1" rx="3.4" ry="3.2" fill="url(#pc)"/>
<circle cx="669.2" cy="502.3" r="1.0" fill="#A67A38" opacity="0.75"/>
<ellipse cx="593.0" cy="500.2" rx="5.5" ry="6.2" fill="url(#pc)"/>
<circle cx="591.8" cy="499.3" r="1.3" fill="#A67A38" opacity="0.75"/>
<ellipse cx="664.2" cy="500.3" rx="4.4" ry="3.9" fill="url(#pc)"/>
<ellipse cx="626.1" cy="500.6" rx="7.0" ry="6.0" fill="url(#pc)"/>
<ellipse cx="595.4" cy="500.7" rx="4.4" ry="4.0" fill="url(#pc)"/>
<ellipse cx="605.9" cy="500.7" rx="3.7" ry="3.3" fill="url(#pc)"/>
<ellipse cx="609.6" cy="501.0" rx="4.6" ry="4.7" fill="url(#pc)"/>
<ellipse cx="664.2" cy="501.0" rx="3.6" ry="3.3" fill="url(#pc)"/>
<ellipse cx="656.4" cy="501.1" rx="6.7" ry="6.1" fill="url(#pc)"/>
<circle cx="657.7" cy="503.9" r="1.2" fill="#A67A38" opacity="0.75"/>
<ellipse cx="529.3" cy="501.1" rx="5.9" ry="5.7" fill="url(#pc2)"/>
<circle cx="530.9" cy="501.8" r="1.4" fill="#A67A38" opacity="0.75"/>
<ellipse cx="522.3" cy="501.2" rx="3.6" ry="2.5" fill="url(#pc)"/>
<ellipse cx="644.8" cy="501.3" rx="5.2" ry="5.4" fill="url(#pc2)"/>
<circle cx="644.2" cy="504.3" r="0.8" fill="#A67A38" opacity="0.75"/>
<ellipse cx="630.1" cy="501.4" rx="2.9" ry="3.3" fill="url(#pc2)"/>
<ellipse cx="599.2" cy="501.5" rx="4.4" ry="4.3" fill="url(#pc2)"/>
<ellipse cx="508.4" cy="501.8" rx="4.2" ry="3.5" fill="url(#pc2)"/>
<circle cx="509.7" cy="502.6" r="1.1" fill="#A67A38" opacity="0.75"/>
<ellipse cx="628.0" cy="501.8" rx="3.9" ry="4.4" fill="url(#pc2)"/>
<ellipse cx="642.2" cy="502.0" rx="4.2" ry="3.0" fill="url(#pc2)"/>
<ellipse cx="510.6" cy="502.0" rx="5.1" ry="4.1" fill="url(#pc)"/>
<ellipse cx="662.2" cy="502.1" rx="5.1" ry="4.0" fill="url(#pc2)"/>
<ellipse cx="648.7" cy="502.2" rx="4.2" ry="4.6" fill="url(#pc)"/>
<ellipse cx="589.3" cy="502.2" rx="5.5" ry="4.2" fill="url(#pc)"/>
<ellipse cx="650.4" cy="502.3" rx="7.0" ry="4.9" fill="url(#pc)"/>
<ellipse cx="566.3" cy="502.3" rx="5.5" ry="5.1" fill="url(#pc2)"/>
<ellipse cx="603.5" cy="502.4" rx="3.5" ry="3.4" fill="url(#pc)"/>
<circle cx="602.7" cy="503.6" r="0.8" fill="#A67A38" opacity="0.75"/>
<ellipse cx="624.1" cy="502.4" rx="4.3" ry="3.8" fill="url(#pc)"/>
<circle cx="622.1" cy="501.0" r="0.8" fill="#A67A38" opacity="0.75"/>
<ellipse cx="552.9" cy="502.5" rx="3.8" ry="2.9" fill="url(#pc2)"/>
<ellipse cx="537.8" cy="502.6" rx="4.2" ry="5.1" fill="url(#pc2)"/>
<ellipse cx="586.9" cy="503.1" rx="6.9" ry="6.1" fill="url(#pc)"/>
<ellipse cx="583.6" cy="503.2" rx="3.5" ry="3.5" fill="url(#pc2)"/>
<ellipse cx="562.7" cy="503.3" rx="7.8" ry="6.4" fill="url(#pc)"/>
<ellipse cx="530.4" cy="503.5" rx="2.8" ry="2.6" fill="url(#pc2)"/>
<ellipse cx="622.5" cy="503.5" rx="7.2" ry="5.2" fill="url(#pc)"/>
<ellipse cx="660.1" cy="503.5" rx="4.1" ry="3.7" fill="url(#pc)"/>
<ellipse cx="617.5" cy="503.6" rx="5.4" ry="5.5" fill="url(#pc)"/>
<circle cx="619.8" cy="506.0" r="0.9" fill="#A67A38" opacity="0.75"/>
<ellipse cx="534.7" cy="503.6" rx="5.3" ry="5.7" fill="url(#pc)"/>
<circle cx="535.8" cy="502.0" r="1.3" fill="#A67A38" opacity="0.75"/>
<ellipse cx="515.2" cy="504.1" rx="3.7" ry="2.8" fill="url(#pc)"/>
<circle cx="514.3" cy="507.0" r="1.1" fill="#A67A38" opacity="0.75"/>
<ellipse cx="656.2" cy="504.3" rx="2.8" ry="2.7" fill="url(#pc2)"/>
<circle cx="657.4" cy="503.1" r="0.9" fill="#A67A38" opacity="0.75"/>
<ellipse cx="550.7" cy="504.5" rx="3.7" ry="2.9" fill="url(#pc2)"/>
<ellipse cx="534.6" cy="504.5" rx="6.8" ry="5.7" fill="url(#pc)"/>
<ellipse cx="526.9" cy="505.1" rx="3.3" ry="3.0" fill="url(#pc)"/>
<circle cx="525.8" cy="506.1" r="0.9" fill="#A67A38" opacity="0.75"/>
<ellipse cx="655.5" cy="505.2" rx="4.8" ry="3.7" fill="url(#pc)"/>
<ellipse cx="508.8" cy="505.2" rx="6.0" ry="5.1" fill="url(#pc)"/>
<ellipse cx="671.9" cy="505.3" rx="3.4" ry="2.9" fill="url(#pc2)"/>
<ellipse cx="626.7" cy="505.3" rx="4.0" ry="3.6" fill="url(#pc)"/>
<ellipse cx="630.0" cy="505.5" rx="7.3" ry="6.6" fill="url(#pc)"/>
<circle cx="627.1" cy="505.0" r="0.7" fill="#A67A38" opacity="0.75"/>
<ellipse cx="533.1" cy="505.5" rx="6.0" ry="4.7" fill="url(#pc2)"/>
<circle cx="535.3" cy="507.7" r="1.2" fill="#A67A38" opacity="0.75"/>
<ellipse cx="537.0" cy="505.6" rx="4.8" ry="3.9" fill="url(#pc2)"/>
<ellipse cx="634.9" cy="505.6" rx="6.1" ry="5.6" fill="url(#pc)"/>
<ellipse cx="563.0" cy="505.6" rx="3.9" ry="3.9" fill="url(#pc2)"/>
<ellipse cx="671.4" cy="506.0" rx="4.5" ry="3.7" fill="url(#pc)"/>
<ellipse cx="635.2" cy="506.1" rx="6.0" ry="3.9" fill="url(#pc)"/>
<ellipse cx="508.0" cy="506.1" rx="3.5" ry="3.5" fill="url(#pc)"/>
<ellipse cx="644.4" cy="507.0" rx="6.4" ry="6.4" fill="url(#pc)"/>
<ellipse cx="502.0" cy="507.0" rx="4.3" ry="3.8" fill="url(#pc2)"/>
<circle cx="501.7" cy="509.5" r="1.2" fill="#A67A38" opacity="0.75"/>
<ellipse cx="613.7" cy="507.1" rx="4.2" ry="3.9" fill="url(#pc)"/>
<ellipse cx="576.2" cy="507.4" rx="5.0" ry="3.6" fill="url(#pc)"/>
<circle cx="577.2" cy="506.5" r="0.8" fill="#A67A38" opacity="0.75"/>
<ellipse cx="501.5" cy="507.5" rx="4.7" ry="5.2" fill="url(#pc2)"/>
<ellipse cx="570.4" cy="507.5" rx="6.8" ry="5.4" fill="url(#pc)"/>
<ellipse cx="637.2" cy="507.6" rx="5.3" ry="3.7" fill="url(#pc2)"/>
<circle cx="639.0" cy="506.3" r="0.8" fill="#A67A38" opacity="0.75"/>
<ellipse cx="509.6" cy="507.7" rx="3.6" ry="3.8" fill="url(#pc)"/>
<ellipse cx="606.8" cy="507.8" rx="4.4" ry="4.9" fill="url(#pc)"/>
<circle cx="607.6" cy="508.8" r="1.4" fill="#A67A38" opacity="0.75"/>
<ellipse cx="502.3" cy="508.2" rx="3.3" ry="2.8" fill="url(#pc)"/>
<ellipse cx="671.5" cy="508.3" rx="3.4" ry="2.5" fill="url(#pc)"/>
<ellipse cx="668.3" cy="508.6" rx="3.6" ry="3.3" fill="url(#pc2)"/>
<ellipse cx="574.6" cy="508.7" rx="2.8" ry="2.8" fill="url(#pc2)"/>
<circle cx="573.3" cy="510.9" r="1.2" fill="#A67A38" opacity="0.75"/>
<ellipse cx="611.2" cy="509.2" rx="5.8" ry="5.1" fill="url(#pc2)"/>
<ellipse cx="509.2" cy="509.5" rx="4.7" ry="3.6" fill="url(#pc2)"/>
<ellipse cx="554.1" cy="509.7" rx="6.8" ry="5.1" fill="url(#pc)"/>
<circle cx="557.0" cy="509.5" r="0.9" fill="#A67A38" opacity="0.75"/>
<ellipse cx="509.7" cy="509.7" rx="3.8" ry="3.7" fill="url(#pc)"/>
<circle cx="509.7" cy="510.2" r="1.2" fill="#A67A38" opacity="0.75"/>
<ellipse cx="506.2" cy="509.7" rx="3.3" ry="3.0" fill="url(#pc)"/>
<ellipse cx="535.1" cy="510.0" rx="4.3" ry="2.9" fill="url(#pc)"/>
<circle cx="534.9" cy="512.2" r="1.1" fill="#A67A38" opacity="0.75"/>
<ellipse cx="552.0" cy="510.0" rx="4.5" ry="3.9" fill="url(#pc2)"/>
<circle cx="553.9" cy="508.7" r="0.8" fill="#A67A38" opacity="0.75"/>
<ellipse cx="661.4" cy="510.2" rx="3.2" ry="4.0" fill="url(#pc)"/>
<ellipse cx="556.6" cy="510.2" rx="2.7" ry="3.3" fill="url(#pc)"/>
<ellipse cx="588.5" cy="510.2" rx="2.8" ry="2.7" fill="url(#pc2)"/>
<circle cx="586.6" cy="508.8" r="0.8" fill="#A67A38" opacity="0.75"/>
<ellipse cx="571.4" cy="510.3" rx="3.7" ry="3.4" fill="url(#pc)"/>
<ellipse cx="665.9" cy="510.4" rx="4.1" ry="4.4" fill="url(#pc)"/>
<ellipse cx="654.5" cy="510.6" rx="5.6" ry="4.3" fill="url(#pc)"/>
<ellipse cx="588.5" cy="510.8" rx="4.1" ry="3.3" fill="url(#pc)"/>
<ellipse cx="666.6" cy="510.8" rx="5.5" ry="5.2" fill="url(#pc)"/>
<ellipse cx="547.8" cy="510.9" rx="5.2" ry="5.3" fill="url(#pc)"/>
<ellipse cx="658.8" cy="510.9" rx="3.4" ry="2.2" fill="url(#pc2)"/>
<circle cx="657.6" cy="512.7" r="1.2" fill="#A67A38" opacity="0.75"/>
<ellipse cx="632.2" cy="511.2" rx="6.3" ry="4.3" fill="url(#pc2)"/>
<ellipse cx="612.1" cy="511.2" rx="6.0" ry="4.3" fill="url(#pc2)"/>
<ellipse cx="517.4" cy="511.3" rx="3.3" ry="2.5" fill="url(#pc2)"/>
<ellipse cx="503.0" cy="511.4" rx="5.4" ry="4.3" fill="url(#pc2)"/>
<ellipse cx="675.4" cy="511.4" rx="3.6" ry="3.0" fill="url(#pc2)"/>
<ellipse cx="582.4" cy="511.5" rx="5.4" ry="5.1" fill="url(#pc)"/>
<circle cx="584.1" cy="509.8" r="1.1" fill="#A67A38" opacity="0.75"/>
<ellipse cx="495.3" cy="511.5" rx="3.1" ry="3.1" fill="url(#pc)"/>
<circle cx="495.0" cy="513.8" r="1.4" fill="#A67A38" opacity="0.75"/>
<ellipse cx="529.1" cy="511.6" rx="6.2" ry="6.3" fill="url(#pc)"/>
<circle cx="531.2" cy="510.6" r="1.1" fill="#A67A38" opacity="0.75"/>
<ellipse cx="603.3" cy="511.6" rx="4.9" ry="4.6" fill="url(#pc)"/>
<circle cx="602.3" cy="511.0" r="1.4" fill="#A67A38" opacity="0.75"/>
<ellipse cx="517.3" cy="511.7" rx="2.4" ry="2.8" fill="url(#pc)"/>
<circle cx="517.2" cy="513.3" r="1.3" fill="#A67A38" opacity="0.75"/>
<ellipse cx="560.2" cy="511.8" rx="3.1" ry="2.7" fill="url(#pc2)"/>
<ellipse cx="543.8" cy="512.0" rx="7.2" ry="5.9" fill="url(#pc)"/>
<ellipse cx="553.1" cy="512.1" rx="5.8" ry="5.4" fill="url(#pc)"/>
<circle cx="553.8" cy="510.9" r="0.7" fill="#A67A38" opacity="0.75"/>
<ellipse cx="585.1" cy="512.1" rx="5.5" ry="6.1" fill="url(#pc)"/>
<ellipse cx="607.3" cy="512.2" rx="4.3" ry="2.8" fill="url(#pc2)"/>
<circle cx="604.5" cy="512.5" r="1.3" fill="#A67A38" opacity="0.75"/>
<ellipse cx="650.9" cy="512.4" rx="4.7" ry="4.7" fill="url(#pc2)"/>
<ellipse cx="531.4" cy="512.5" rx="3.6" ry="2.6" fill="url(#pc)"/>
<circle cx="528.5" cy="511.3" r="0.7" fill="#A67A38" opacity="0.75"/>
<ellipse cx="537.3" cy="512.6" rx="3.8" ry="4.2" fill="url(#pc)"/>
<ellipse cx="675.1" cy="512.8" rx="3.7" ry="4.2" fill="url(#pc)"/>
<ellipse cx="542.7" cy="512.9" rx="3.4" ry="3.1" fill="url(#pc2)"/>
<ellipse cx="643.1" cy="513.0" rx="6.7" ry="4.7" fill="url(#pc2)"/>
<ellipse cx="590.8" cy="513.0" rx="5.4" ry="4.1" fill="url(#pc)"/>
<ellipse cx="592.7" cy="513.1" rx="6.9" ry="6.0" fill="url(#pc)"/>
<ellipse cx="658.8" cy="513.1" rx="4.6" ry="5.0" fill="url(#pc)"/>
<ellipse cx="618.8" cy="513.1" rx="5.2" ry="3.9" fill="url(#pc2)"/>
<ellipse cx="668.6" cy="513.1" rx="4.5" ry="3.5" fill="url(#pc)"/>
<ellipse cx="510.2" cy="513.4" rx="4.8" ry="4.5" fill="url(#pc)"/>
<ellipse cx="534.2" cy="513.4" rx="5.1" ry="5.4" fill="url(#pc2)"/>
<circle cx="535.3" cy="512.2" r="0.8" fill="#A67A38" opacity="0.75"/>
<ellipse cx="587.3" cy="513.7" rx="5.1" ry="4.8" fill="url(#pc)"/>
<ellipse cx="504.9" cy="513.9" rx="3.8" ry="4.1" fill="url(#pc)"/>
<circle cx="502.0" cy="516.3" r="1.0" fill="#A67A38" opacity="0.75"/>
<ellipse cx="581.3" cy="514.0" rx="5.5" ry="6.5" fill="url(#pc)"/>
<ellipse cx="675.5" cy="514.0" rx="4.5" ry="3.4" fill="url(#pc)"/>
<ellipse cx="660.9" cy="514.1" rx="4.1" ry="5.1" fill="url(#pc)"/>
<ellipse cx="662.9" cy="514.1" rx="4.2" ry="2.9" fill="url(#pc)"/>
<circle cx="663.8" cy="514.5" r="1.3" fill="#A67A38" opacity="0.75"/>
<ellipse cx="511.2" cy="514.3" rx="5.1" ry="4.4" fill="url(#pc2)"/>
<ellipse cx="568.3" cy="514.4" rx="6.3" ry="7.0" fill="url(#pc)"/>
<circle cx="569.2" cy="512.7" r="1.3" fill="#A67A38" opacity="0.75"/>
<ellipse cx="651.8" cy="514.4" rx="6.0" ry="4.8" fill="url(#pc2)"/>
<ellipse cx="663.4" cy="514.6" rx="3.4" ry="2.3" fill="url(#pc2)"/>
<ellipse cx="599.9" cy="514.7" rx="3.3" ry="3.4" fill="url(#pc)"/>
<ellipse cx="534.8" cy="514.8" rx="5.5" ry="4.6" fill="url(#pc)"/>
<circle cx="536.3" cy="516.6" r="0.9" fill="#A67A38" opacity="0.75"/>
<ellipse cx="612.0" cy="514.9" rx="6.0" ry="5.4" fill="url(#pc)"/>
<ellipse cx="521.3" cy="514.9" rx="3.3" ry="3.2" fill="url(#pc)"/>
<ellipse cx="502.3" cy="515.2" rx="5.3" ry="4.3" fill="url(#pc)"/>
<ellipse cx="674.1" cy="515.7" rx="4.2" ry="3.3" fill="url(#pc)"/>
<circle cx="675.3" cy="516.7" r="1.1" fill="#A67A38" opacity="0.75"/>
<ellipse cx="676.7" cy="515.7" rx="2.9" ry="2.8" fill="url(#pc2)"/>
<ellipse cx="533.0" cy="515.8" rx="4.4" ry="3.6" fill="url(#pc)"/>
<ellipse cx="518.4" cy="515.9" rx="5.5" ry="4.5" fill="url(#pc)"/>
<ellipse cx="678.4" cy="515.9" rx="5.2" ry="4.5" fill="url(#pc2)"/>
<ellipse cx="564.4" cy="516.0" rx="4.2" ry="3.3" fill="url(#pc)"/>
<ellipse cx="551.9" cy="516.1" rx="6.6" ry="6.0" fill="url(#pc)"/>
<ellipse cx="619.2" cy="516.2" rx="3.5" ry="3.3" fill="url(#pc)"/>
<ellipse cx="618.2" cy="516.3" rx="3.5" ry="3.5" fill="url(#pc2)"/>
<ellipse cx="531.9" cy="516.3" rx="6.9" ry="5.1" fill="url(#pc)"/>
<ellipse cx="538.8" cy="516.3" rx="5.5" ry="5.3" fill="url(#pc)"/>
<circle cx="540.1" cy="514.4" r="1.1" fill="#A67A38" opacity="0.75"/>
<ellipse cx="649.8" cy="516.4" rx="5.4" ry="4.7" fill="url(#pc2)"/>
<circle cx="647.2" cy="518.4" r="1.1" fill="#A67A38" opacity="0.75"/>
<ellipse cx="665.2" cy="516.6" rx="4.7" ry="4.5" fill="url(#pc)"/>
<ellipse cx="654.0" cy="516.7" rx="4.3" ry="3.8" fill="url(#pc)"/>
<ellipse cx="498.3" cy="516.8" rx="4.9" ry="4.2" fill="url(#pc)"/>
<ellipse cx="595.9" cy="517.4" rx="5.2" ry="3.6" fill="url(#pc)"/>
<ellipse cx="540.0" cy="517.7" rx="5.5" ry="5.8" fill="url(#pc)"/>
<circle cx="542.9" cy="518.6" r="1.3" fill="#A67A38" opacity="0.75"/>
<ellipse cx="613.3" cy="518.1" rx="6.6" ry="5.6" fill="url(#pc2)"/>
<ellipse cx="496.9" cy="518.1" rx="5.1" ry="3.8" fill="url(#pc2)"/>
<ellipse cx="526.5" cy="518.1" rx="4.0" ry="3.8" fill="url(#pc)"/>
<ellipse cx="545.1" cy="518.1" rx="4.0" ry="3.6" fill="url(#pc)"/>
<circle cx="542.9" cy="516.4" r="0.8" fill="#A67A38" opacity="0.75"/>
<ellipse cx="528.7" cy="518.1" rx="5.3" ry="5.0" fill="url(#pc2)"/>
<ellipse cx="610.6" cy="518.6" rx="4.9" ry="5.2" fill="url(#pc)"/>
<ellipse cx="534.9" cy="518.6" rx="4.7" ry="3.2" fill="url(#pc2)"/>
<ellipse cx="521.9" cy="518.8" rx="6.4" ry="4.3" fill="url(#pc)"/>
<circle cx="523.5" cy="519.7" r="1.2" fill="#A67A38" opacity="0.75"/>
<ellipse cx="498.1" cy="519.1" rx="3.5" ry="2.8" fill="url(#pc)"/>
<ellipse cx="574.4" cy="519.5" rx="6.1" ry="4.4" fill="url(#pc)"/>
<circle cx="572.6" cy="520.2" r="1.1" fill="#A67A38" opacity="0.75"/>
<ellipse cx="506.7" cy="519.6" rx="3.3" ry="2.8" fill="url(#pc)"/>
<ellipse cx="506.4" cy="520.0" rx="4.2" ry="3.9" fill="url(#pc)"/>
<circle cx="507.9" cy="522.1" r="1.4" fill="#A67A38" opacity="0.75"/>
<ellipse cx="581.6" cy="520.1" rx="4.6" ry="4.3" fill="url(#pc)"/>
<circle cx="584.0" cy="522.6" r="1.0" fill="#A67A38" opacity="0.75"/>
<ellipse cx="676.5" cy="520.2" rx="3.9" ry="3.4" fill="url(#pc)"/>
<ellipse cx="539.5" cy="520.2" rx="6.1" ry="4.9" fill="url(#pc2)"/>
<ellipse cx="498.8" cy="520.4" rx="3.2" ry="3.0" fill="url(#pc)"/>
<ellipse cx="666.3" cy="520.4" rx="3.5" ry="3.5" fill="url(#pc2)"/>
<circle cx="663.5" cy="520.4" r="1.0" fill="#A67A38" opacity="0.75"/>
<ellipse cx="593.1" cy="520.6" rx="3.5" ry="3.7" fill="url(#pc)"/>
<ellipse cx="573.3" cy="520.7" rx="4.4" ry="4.6" fill="url(#pc2)"/>
<ellipse cx="498.4" cy="520.9" rx="2.8" ry="3.0" fill="url(#pc)"/>
<ellipse cx="659.9" cy="521.0" rx="3.6" ry="3.2" fill="url(#pc)"/>
<circle cx="661.5" cy="520.2" r="1.2" fill="#A67A38" opacity="0.75"/>
<ellipse cx="680.5" cy="521.2" rx="3.6" ry="3.4" fill="url(#pc2)"/>
<ellipse cx="576.9" cy="521.4" rx="5.7" ry="4.4" fill="url(#pc2)"/>
<ellipse cx="643.4" cy="521.4" rx="6.6" ry="6.6" fill="url(#pc)"/>
<circle cx="645.2" cy="524.0" r="1.1" fill="#A67A38" opacity="0.75"/>
<ellipse cx="613.8" cy="521.6" rx="7.5" ry="5.1" fill="url(#pc2)"/>
<ellipse cx="610.5" cy="521.6" rx="4.7" ry="3.3" fill="url(#pc)"/>
<ellipse cx="638.4" cy="521.9" rx="3.8" ry="3.2" fill="url(#pc)"/>
<circle cx="640.7" cy="524.2" r="1.1" fill="#A67A38" opacity="0.75"/>
<ellipse cx="529.3" cy="522.0" rx="4.9" ry="4.4" fill="url(#pc)"/>
<ellipse cx="558.6" cy="522.1" rx="7.1" ry="6.8" fill="url(#pc2)"/>
<circle cx="557.1" cy="523.8" r="0.9" fill="#A67A38" opacity="0.75"/>
<ellipse cx="624.3" cy="522.2" rx="3.4" ry="3.1" fill="url(#pc)"/>
<ellipse cx="555.5" cy="522.2" rx="5.8" ry="5.5" fill="url(#pc)"/>
<circle cx="552.6" cy="523.6" r="0.9" fill="#A67A38" opacity="0.75"/>
<ellipse cx="499.3" cy="522.4" rx="3.2" ry="2.8" fill="url(#pc)"/>
<circle cx="498.1" cy="521.9" r="0.8" fill="#A67A38" opacity="0.75"/>
<ellipse cx="586.8" cy="523.0" rx="5.9" ry="4.5" fill="url(#pc)"/>
<ellipse cx="590.9" cy="523.3" rx="5.2" ry="4.9" fill="url(#pc)"/>
<circle cx="588.5" cy="525.2" r="1.1" fill="#A67A38" opacity="0.75"/>
<ellipse cx="643.3" cy="523.4" rx="5.7" ry="5.9" fill="url(#pc)"/>
<ellipse cx="546.9" cy="523.7" rx="4.4" ry="3.9" fill="url(#pc2)"/>
<ellipse cx="677.3" cy="523.8" rx="2.4" ry="2.2" fill="url(#pc2)"/>
<ellipse cx="624.1" cy="523.8" rx="7.0" ry="6.2" fill="url(#pc)"/>
<circle cx="625.6" cy="524.9" r="1.1" fill="#A67A38" opacity="0.75"/>
<ellipse cx="633.2" cy="523.9" rx="4.6" ry="5.1" fill="url(#pc2)"/>
<ellipse cx="667.8" cy="524.0" rx="2.7" ry="2.9" fill="url(#pc2)"/>
<circle cx="669.4" cy="524.4" r="1.2" fill="#A67A38" opacity="0.75"/>
<ellipse cx="599.3" cy="524.1" rx="4.8" ry="3.2" fill="url(#pc)"/>
<circle cx="600.7" cy="526.5" r="1.2" fill="#A67A38" opacity="0.75"/>
<ellipse cx="565.1" cy="524.1" rx="5.4" ry="6.3" fill="url(#pc)"/>
<ellipse cx="620.8" cy="524.1" rx="6.5" ry="5.1" fill="url(#pc)"/>
<circle cx="620.7" cy="523.8" r="0.8" fill="#A67A38" opacity="0.75"/>
<ellipse cx="679.3" cy="524.2" rx="3.0" ry="2.0" fill="url(#pc2)"/>
<ellipse cx="625.5" cy="524.4" rx="6.2" ry="4.5" fill="url(#pc)"/>
<ellipse cx="579.1" cy="524.5" rx="6.6" ry="5.9" fill="url(#pc)"/>
<ellipse cx="562.4" cy="524.8" rx="7.9" ry="6.9" fill="url(#pc2)"/>
<ellipse cx="673.4" cy="524.8" rx="3.6" ry="3.6" fill="url(#pc)"/>
<ellipse cx="644.0" cy="525.0" rx="4.5" ry="5.1" fill="url(#pc)"/>
<ellipse cx="612.3" cy="525.2" rx="5.2" ry="5.1" fill="url(#pc)"/>
<ellipse cx="528.0" cy="525.2" rx="3.8" ry="3.8" fill="url(#pc2)"/>
<circle cx="529.8" cy="527.7" r="0.9" fill="#A67A38" opacity="0.75"/>
<ellipse cx="677.7" cy="525.5" rx="2.9" ry="2.5" fill="url(#pc)"/>
<ellipse cx="590.8" cy="525.6" rx="4.1" ry="3.7" fill="url(#pc)"/>
<ellipse cx="561.3" cy="525.6" rx="3.4" ry="3.2" fill="url(#pc)"/>
<ellipse cx="588.9" cy="525.6" rx="3.1" ry="3.8" fill="url(#pc)"/>
<circle cx="587.3" cy="528.4" r="1.4" fill="#A67A38" opacity="0.75"/>
<ellipse cx="544.0" cy="525.6" rx="5.0" ry="4.4" fill="url(#pc2)"/>
<ellipse cx="617.7" cy="525.7" rx="4.3" ry="5.0" fill="url(#pc)"/>
<ellipse cx="649.1" cy="525.7" rx="3.7" ry="3.4" fill="url(#pc2)"/>
<ellipse cx="626.8" cy="525.8" rx="5.0" ry="4.5" fill="url(#pc)"/>
<ellipse cx="663.0" cy="525.8" rx="4.1" ry="3.7" fill="url(#pc2)"/>
<ellipse cx="497.0" cy="525.9" rx="2.7" ry="3.3" fill="url(#pc)"/>
<ellipse cx="627.9" cy="525.9" rx="6.3" ry="5.2" fill="url(#pc2)"/>
<ellipse cx="506.9" cy="526.0" rx="5.1" ry="3.9" fill="url(#pc2)"/>
<circle cx="506.3" cy="525.2" r="0.9" fill="#A67A38" opacity="0.75"/>
<ellipse cx="510.4" cy="526.3" rx="4.1" ry="4.1" fill="url(#pc)"/>
<ellipse cx="540.5" cy="526.4" rx="4.6" ry="5.8" fill="url(#pc2)"/>
<ellipse cx="675.3" cy="526.7" rx="3.6" ry="2.9" fill="url(#pc2)"/>
<ellipse cx="600.1" cy="526.9" rx="6.0" ry="4.3" fill="url(#pc)"/>
<ellipse cx="663.8" cy="526.9" rx="4.7" ry="4.1" fill="url(#pc2)"/>
<ellipse cx="623.6" cy="526.9" rx="4.2" ry="3.9" fill="url(#pc2)"/>
<ellipse cx="511.8" cy="527.0" rx="3.7" ry="3.3" fill="url(#pc)"/>
<ellipse cx="670.8" cy="527.1" rx="4.4" ry="3.5" fill="url(#pc)"/>
<ellipse cx="587.2" cy="527.3" rx="5.9" ry="4.6" fill="url(#pc)"/>
<ellipse cx="578.1" cy="527.4" rx="6.5" ry="4.9" fill="url(#pc2)"/>
<ellipse cx="497.8" cy="527.4" rx="2.0" ry="2.1" fill="url(#pc)"/>
<ellipse cx="650.7" cy="527.5" rx="3.1" ry="2.7" fill="url(#pc2)"/>
<ellipse cx="523.1" cy="527.5" rx="2.8" ry="2.7" fill="url(#pc)"/>
<circle cx="523.6" cy="527.6" r="1.3" fill="#A67A38" opacity="0.75"/>
<ellipse cx="497.1" cy="527.6" rx="5.2" ry="3.6" fill="url(#pc)"/>
<ellipse cx="678.5" cy="527.7" rx="3.3" ry="3.4" fill="url(#pc)"/>
<ellipse cx="676.8" cy="527.8" rx="4.4" ry="4.0" fill="url(#pc)"/>
<circle cx="677.0" cy="526.1" r="0.9" fill="#A67A38" opacity="0.75"/>
<ellipse cx="509.2" cy="528.1" rx="5.7" ry="5.0" fill="url(#pc)"/>
<ellipse cx="537.8" cy="528.2" rx="6.0" ry="5.1" fill="url(#pc)"/>
<circle cx="535.6" cy="530.0" r="1.3" fill="#A67A38" opacity="0.75"/>
<ellipse cx="495.2" cy="528.5" rx="3.5" ry="2.5" fill="url(#pc2)"/>
<ellipse cx="561.1" cy="528.6" rx="3.7" ry="2.8" fill="url(#pc)"/>
<ellipse cx="653.3" cy="528.8" rx="5.4" ry="6.2" fill="url(#pc)"/>
<ellipse cx="503.4" cy="528.8" rx="3.5" ry="2.8" fill="url(#pc)"/>
<circle cx="502.2" cy="529.9" r="0.9" fill="#A67A38" opacity="0.75"/>
<ellipse cx="588.6" cy="529.0" rx="3.8" ry="3.5" fill="url(#pc2)"/>
<ellipse cx="497.6" cy="529.2" rx="4.3" ry="4.8" fill="url(#pc2)"/>
<circle cx="498.0" cy="527.6" r="0.8" fill="#A67A38" opacity="0.75"/>
<ellipse cx="616.6" cy="529.5" rx="3.2" ry="3.7" fill="url(#pc2)"/>
<ellipse cx="574.1" cy="529.7" rx="4.0" ry="2.8" fill="url(#pc)"/>
<ellipse cx="582.3" cy="529.8" rx="6.8" ry="6.0" fill="url(#pc2)"/>
<circle cx="583.5" cy="528.0" r="1.1" fill="#A67A38" opacity="0.75"/>
<ellipse cx="638.5" cy="529.8" rx="5.8" ry="4.2" fill="url(#pc2)"/>
<ellipse cx="587.5" cy="529.9" rx="6.2" ry="6.6" fill="url(#pc2)"/>
<ellipse cx="522.6" cy="530.0" rx="4.3" ry="3.6" fill="url(#pc)"/>
<circle cx="524.9" cy="529.7" r="1.2" fill="#A67A38" opacity="0.75"/>
<ellipse cx="499.2" cy="530.0" rx="3.8" ry="3.3" fill="url(#pc)"/>
<ellipse cx="626.5" cy="530.0" rx="7.5" ry="5.8" fill="url(#pc2)"/>
<circle cx="624.5" cy="528.2" r="1.1" fill="#A67A38" opacity="0.75"/>
<ellipse cx="597.0" cy="530.1" rx="6.3" ry="4.5" fill="url(#pc)"/>
<circle cx="595.3" cy="528.9" r="0.7" fill="#A67A38" opacity="0.75"/>
<ellipse cx="617.2" cy="530.2" rx="4.1" ry="3.6" fill="url(#pc)"/>
<ellipse cx="516.4" cy="530.2" rx="6.2" ry="5.0" fill="url(#pc)"/>
<circle cx="513.5" cy="531.2" r="1.3" fill="#A67A38" opacity="0.75"/>
<ellipse cx="613.8" cy="530.3" rx="4.4" ry="3.3" fill="url(#pc)"/>
<ellipse cx="573.0" cy="530.3" rx="5.1" ry="3.9" fill="url(#pc2)"/>
<circle cx="575.8" cy="532.9" r="1.3" fill="#A67A38" opacity="0.75"/>
<ellipse cx="532.6" cy="530.4" rx="3.1" ry="3.2" fill="url(#pc)"/>
<ellipse cx="579.4" cy="530.5" rx="6.1" ry="5.1" fill="url(#pc)"/>
<ellipse cx="647.2" cy="530.5" rx="4.6" ry="4.8" fill="url(#pc)"/>
<circle cx="646.8" cy="531.6" r="1.2" fill="#A67A38" opacity="0.75"/>
<ellipse cx="673.1" cy="530.6" rx="4.0" ry="3.0" fill="url(#pc)"/>
<ellipse cx="538.6" cy="530.6" rx="3.1" ry="3.4" fill="url(#pc2)"/>
<circle cx="538.0" cy="532.5" r="0.7" fill="#A67A38" opacity="0.75"/>
<ellipse cx="674.8" cy="531.1" rx="4.7" ry="4.4" fill="url(#pc)"/>
<ellipse cx="670.7" cy="531.3" rx="3.1" ry="2.8" fill="url(#pc2)"/>
<ellipse cx="680.1" cy="531.3" rx="4.3" ry="3.2" fill="url(#pc)"/>
<ellipse cx="649.3" cy="531.3" rx="2.5" ry="2.4" fill="url(#pc)"/>
<ellipse cx="663.5" cy="531.4" rx="4.8" ry="3.6" fill="url(#pc2)"/>
<ellipse cx="612.4" cy="531.5" rx="5.7" ry="5.4" fill="url(#pc)"/>
<circle cx="609.4" cy="530.1" r="0.8" fill="#A67A38" opacity="0.75"/>
<ellipse cx="667.4" cy="531.5" rx="3.6" ry="3.1" fill="url(#pc2)"/>
<circle cx="668.2" cy="530.2" r="0.8" fill="#A67A38" opacity="0.75"/>
<ellipse cx="679.2" cy="531.7" rx="2.9" ry="2.7" fill="url(#pc)"/>
<ellipse cx="563.6" cy="531.8" rx="6.4" ry="5.5" fill="url(#pc)"/>
<ellipse cx="598.4" cy="531.9" rx="5.2" ry="4.4" fill="url(#pc)"/>
<ellipse cx="591.6" cy="532.0" rx="5.9" ry="5.1" fill="url(#pc)"/>
<ellipse cx="641.9" cy="532.0" rx="4.7" ry="4.5" fill="url(#pc2)"/>
<circle cx="643.5" cy="532.3" r="1.4" fill="#A67A38" opacity="0.75"/>
<ellipse cx="648.7" cy="532.2" rx="5.9" ry="6.1" fill="url(#pc)"/>
<ellipse cx="564.3" cy="532.5" rx="7.6" ry="6.7" fill="url(#pc2)"/>
<circle cx="565.0" cy="530.9" r="1.2" fill="#A67A38" opacity="0.75"/>
<ellipse cx="508.5" cy="532.6" rx="3.8" ry="3.0" fill="url(#pc2)"/>
<ellipse cx="497.5" cy="532.8" rx="4.5" ry="3.5" fill="url(#pc)"/>
<ellipse cx="538.8" cy="533.0" rx="6.6" ry="6.1" fill="url(#pc2)"/>
<ellipse cx="567.9" cy="533.1" rx="3.4" ry="4.1" fill="url(#pc)"/>
<ellipse cx="629.9" cy="533.2" rx="3.2" ry="3.3" fill="url(#pc)"/>
<circle cx="627.7" cy="531.6" r="1.0" fill="#A67A38" opacity="0.75"/>
<ellipse cx="514.0" cy="533.4" rx="3.6" ry="2.9" fill="url(#pc)"/>
<ellipse cx="543.7" cy="533.4" rx="3.3" ry="3.2" fill="url(#pc)"/>
<ellipse cx="650.8" cy="533.6" rx="4.8" ry="4.3" fill="url(#pc)"/>
<circle cx="649.0" cy="533.8" r="1.3" fill="#A67A38" opacity="0.75"/>
<ellipse cx="516.8" cy="533.8" rx="4.9" ry="3.9" fill="url(#pc2)"/>
<circle cx="517.2" cy="533.9" r="1.4" fill="#A67A38" opacity="0.75"/>
<ellipse cx="679.7" cy="533.9" rx="2.6" ry="2.2" fill="url(#pc)"/>
<circle cx="681.5" cy="536.2" r="0.8" fill="#A67A38" opacity="0.75"/>
<ellipse cx="668.5" cy="533.9" rx="3.1" ry="2.4" fill="url(#pc)"/>
<ellipse cx="537.5" cy="534.1" rx="4.4" ry="3.3" fill="url(#pc2)"/>
<ellipse cx="520.3" cy="534.2" rx="4.2" ry="3.2" fill="url(#pc)"/>
<ellipse cx="537.3" cy="534.6" rx="5.0" ry="3.7" fill="url(#pc2)"/>
<ellipse cx="680.3" cy="534.6" rx="3.6" ry="3.7" fill="url(#pc)"/>
<ellipse cx="561.9" cy="534.7" rx="2.9" ry="3.4" fill="url(#pc)"/>
<circle cx="559.5" cy="536.6" r="0.8" fill="#A67A38" opacity="0.75"/>
<ellipse cx="656.7" cy="534.7" rx="3.0" ry="2.9" fill="url(#pc2)"/>
<ellipse cx="644.1" cy="534.9" rx="7.0" ry="6.4" fill="url(#pc2)"/>
<ellipse cx="662.4" cy="535.1" rx="4.9" ry="4.3" fill="url(#pc2)"/>
<ellipse cx="559.3" cy="535.4" rx="5.3" ry="4.3" fill="url(#pc)"/>
<ellipse cx="679.4" cy="535.5" rx="2.9" ry="2.2" fill="url(#pc2)"/>
<circle cx="678.6" cy="535.7" r="1.3" fill="#A67A38" opacity="0.75"/>
<ellipse cx="643.2" cy="535.6" rx="5.3" ry="4.9" fill="url(#pc)"/>
<ellipse cx="628.2" cy="535.7" rx="5.9" ry="5.3" fill="url(#pc2)"/>
<circle cx="625.9" cy="535.9" r="1.3" fill="#A67A38" opacity="0.75"/>
<ellipse cx="632.1" cy="536.0" rx="5.6" ry="5.6" fill="url(#pc2)"/>
<ellipse cx="495.3" cy="536.0" rx="3.8" ry="4.3" fill="url(#pc)"/>
<circle cx="493.6" cy="535.4" r="0.8" fill="#A67A38" opacity="0.75"/>
<ellipse cx="569.5" cy="536.1" rx="5.8" ry="6.3" fill="url(#pc)"/>
<circle cx="570.4" cy="537.1" r="1.1" fill="#A67A38" opacity="0.75"/>
<ellipse cx="569.8" cy="536.6" rx="4.3" ry="3.5" fill="url(#pc)"/>
<ellipse cx="500.3" cy="536.7" rx="2.3" ry="2.5" fill="url(#pc2)"/>
<ellipse cx="521.8" cy="536.8" rx="5.4" ry="4.8" fill="url(#pc2)"/>
<ellipse cx="671.2" cy="536.8" rx="3.4" ry="3.2" fill="url(#pc)"/>
<ellipse cx="538.8" cy="536.9" rx="4.7" ry="5.5" fill="url(#pc2)"/>
<ellipse cx="565.1" cy="536.9" rx="4.9" ry="3.8" fill="url(#pc)"/>
<ellipse cx="541.8" cy="537.0" rx="3.5" ry="4.0" fill="url(#pc)"/>
<ellipse cx="637.4" cy="537.0" rx="7.2" ry="5.7" fill="url(#pc)"/>
<ellipse cx="530.5" cy="537.1" rx="3.7" ry="3.2" fill="url(#pc)"/>
<ellipse cx="674.3" cy="537.2" rx="2.4" ry="2.7" fill="url(#pc)"/>
<ellipse cx="642.4" cy="537.3" rx="5.4" ry="4.0" fill="url(#pc)"/>
<circle cx="642.4" cy="537.1" r="0.8" fill="#A67A38" opacity="0.75"/>
<ellipse cx="532.2" cy="537.3" rx="3.7" ry="4.1" fill="url(#pc2)"/>
<circle cx="532.3" cy="540.3" r="0.8" fill="#A67A38" opacity="0.75"/>
<ellipse cx="679.8" cy="537.5" rx="3.2" ry="4.2" fill="url(#pc2)"/>
<ellipse cx="530.3" cy="537.6" rx="6.8" ry="5.7" fill="url(#pc)"/>
<circle cx="529.4" cy="537.8" r="1.3" fill="#A67A38" opacity="0.75"/>
<ellipse cx="661.0" cy="538.0" rx="4.9" ry="4.3" fill="url(#pc)"/>
<ellipse cx="561.6" cy="538.1" rx="4.8" ry="3.9" fill="url(#pc2)"/>
<ellipse cx="673.2" cy="538.2" rx="2.2" ry="2.2" fill="url(#pc)"/>
<ellipse cx="527.1" cy="538.4" rx="4.4" ry="3.7" fill="url(#pc)"/>
<circle cx="525.0" cy="537.5" r="1.0" fill="#A67A38" opacity="0.75"/>
<ellipse cx="548.2" cy="538.4" rx="7.2" ry="5.7" fill="url(#pc)"/>
<ellipse cx="538.3" cy="538.6" rx="6.8" ry="6.1" fill="url(#pc)"/>
<circle cx="541.1" cy="539.3" r="0.9" fill="#A67A38" opacity="0.75"/>
<ellipse cx="511.9" cy="538.8" rx="5.4" ry="4.4" fill="url(#pc)"/>
<ellipse cx="679.2" cy="539.0" rx="2.8" ry="2.0" fill="url(#pc)"/>
<ellipse cx="500.9" cy="539.1" rx="2.4" ry="2.3" fill="url(#pc)"/>
<ellipse cx="664.0" cy="539.1" rx="3.6" ry="3.6" fill="url(#pc)"/>
<ellipse cx="557.3" cy="539.2" rx="4.8" ry="3.0" fill="url(#pc)"/>
<circle cx="559.2" cy="538.6" r="0.7" fill="#A67A38" opacity="0.75"/>
<ellipse cx="567.2" cy="539.3" rx="5.4" ry="5.4" fill="url(#pc)"/>
<circle cx="565.2" cy="537.3" r="0.7" fill="#A67A38" opacity="0.75"/>
<ellipse cx="677.2" cy="539.4" rx="4.6" ry="4.8" fill="url(#pc)"/>
<ellipse cx="591.1" cy="539.5" rx="6.6" ry="6.5" fill="url(#pc2)"/>
<ellipse cx="661.5" cy="539.6" rx="3.9" ry="3.6" fill="url(#pc)"/>
<circle cx="664.0" cy="540.0" r="0.8" fill="#A67A38" opacity="0.75"/>
<ellipse cx="558.9" cy="539.6" rx="7.1" ry="5.3" fill="url(#pc)"/>
<ellipse cx="669.6" cy="539.8" rx="5.0" ry="4.5" fill="url(#pc)"/>
<ellipse cx="500.8" cy="540.0" rx="2.9" ry="3.1" fill="url(#pc2)"/>
<ellipse cx="637.7" cy="540.1" rx="5.5" ry="3.9" fill="url(#pc2)"/>
<ellipse cx="680.6" cy="540.1" rx="4.2" ry="3.4" fill="url(#pc)"/>
<circle cx="681.4" cy="538.6" r="0.7" fill="#A67A38" opacity="0.75"/>
<ellipse cx="596.6" cy="540.4" rx="6.7" ry="5.4" fill="url(#pc)"/>
<circle cx="598.2" cy="540.6" r="0.8" fill="#A67A38" opacity="0.75"/>
<ellipse cx="548.0" cy="540.4" rx="4.9" ry="3.8" fill="url(#pc2)"/>
<ellipse cx="507.1" cy="540.7" rx="5.2" ry="4.8" fill="url(#pc)"/>
<ellipse cx="557.1" cy="540.8" rx="7.1" ry="5.0" fill="url(#pc)"/>
<circle cx="557.1" cy="539.7" r="1.1" fill="#A67A38" opacity="0.75"/>
<ellipse cx="623.2" cy="541.1" rx="7.1" ry="5.3" fill="url(#pc)"/>
<ellipse cx="625.4" cy="541.2" rx="6.7" ry="6.7" fill="url(#pc2)"/>
<ellipse cx="641.3" cy="541.4" rx="3.3" ry="3.7" fill="url(#pc)"/>
<ellipse cx="507.0" cy="541.7" rx="3.3" ry="3.2" fill="url(#pc2)"/>
<ellipse cx="609.3" cy="541.8" rx="5.2" ry="3.5" fill="url(#pc)"/>
<ellipse cx="580.9" cy="541.9" rx="4.0" ry="4.5" fill="url(#pc)"/>
<circle cx="580.3" cy="541.1" r="1.1" fill="#A67A38" opacity="0.75"/>
<ellipse cx="665.0" cy="541.9" rx="4.2" ry="3.4" fill="url(#pc)"/>
<ellipse cx="660.1" cy="542.0" rx="4.1" ry="4.4" fill="url(#pc)"/>
<circle cx="658.9" cy="544.8" r="1.0" fill="#A67A38" opacity="0.75"/>
<ellipse cx="503.4" cy="542.1" rx="2.5" ry="2.8" fill="url(#pc2)"/>
<circle cx="501.7" cy="540.7" r="0.7" fill="#A67A38" opacity="0.75"/>
<ellipse cx="662.6" cy="542.2" rx="4.8" ry="3.5" fill="url(#pc2)"/>
<circle cx="664.0" cy="543.5" r="0.7" fill="#A67A38" opacity="0.75"/>
<ellipse cx="666.6" cy="542.2" rx="2.7" ry="2.7" fill="url(#pc2)"/>
<ellipse cx="510.5" cy="542.2" rx="3.3" ry="3.4" fill="url(#pc2)"/>
<ellipse cx="513.0" cy="542.5" rx="3.0" ry="2.4" fill="url(#pc)"/>
<circle cx="511.2" cy="543.1" r="1.1" fill="#A67A38" opacity="0.75"/>
<ellipse cx="589.1" cy="542.7" rx="5.4" ry="4.7" fill="url(#pc)"/>
<ellipse cx="507.7" cy="542.8" rx="6.4" ry="5.1" fill="url(#pc)"/>
<ellipse cx="508.7" cy="542.8" rx="4.5" ry="3.9" fill="url(#pc2)"/>
<ellipse cx="611.0" cy="542.8" rx="3.6" ry="3.1" fill="url(#pc)"/>
<ellipse cx="661.8" cy="542.8" rx="5.3" ry="4.6" fill="url(#pc)"/>
<ellipse cx="502.2" cy="542.9" rx="2.8" ry="2.6" fill="url(#pc)"/>
<ellipse cx="586.1" cy="543.1" rx="6.4" ry="5.9" fill="url(#pc2)"/>
<ellipse cx="597.4" cy="543.2" rx="5.3" ry="4.9" fill="url(#pc)"/>
<ellipse cx="592.0" cy="543.2" rx="5.1" ry="4.9" fill="url(#pc2)"/>
<ellipse cx="639.7" cy="543.4" rx="4.9" ry="3.9" fill="url(#pc)"/>
<ellipse cx="644.4" cy="543.4" rx="6.0" ry="5.3" fill="url(#pc)"/>
<ellipse cx="543.9" cy="543.6" rx="3.1" ry="3.1" fill="url(#pc)"/>
<ellipse cx="612.1" cy="543.6" rx="4.9" ry="4.4" fill="url(#pc)"/>
<ellipse cx="617.4" cy="543.7" rx="4.2" ry="5.2" fill="url(#pc)"/>
<circle cx="616.2" cy="546.4" r="1.2" fill="#A67A38" opacity="0.75"/>
<ellipse cx="541.7" cy="543.7" rx="3.9" ry="2.8" fill="url(#pc2)"/>
<ellipse cx="579.0" cy="543.7" rx="4.8" ry="4.5" fill="url(#pc)"/>
<ellipse cx="644.9" cy="543.7" rx="6.7" ry="5.0" fill="url(#pc)"/>
<circle cx="642.3" cy="544.6" r="1.1" fill="#A67A38" opacity="0.75"/>
<ellipse cx="502.8" cy="543.9" rx="5.1" ry="5.4" fill="url(#pc2)"/>
<ellipse cx="541.6" cy="544.0" rx="5.6" ry="3.9" fill="url(#pc)"/>
<circle cx="541.9" cy="545.0" r="1.4" fill="#A67A38" opacity="0.75"/>
<ellipse cx="506.5" cy="544.2" rx="3.3" ry="4.1" fill="url(#pc2)"/>
<ellipse cx="552.5" cy="544.2" rx="7.0" ry="6.0" fill="url(#pc)"/>
<ellipse cx="637.6" cy="544.2" rx="4.1" ry="4.0" fill="url(#pc)"/>
<ellipse cx="627.1" cy="544.3" rx="4.9" ry="3.8" fill="url(#pc)"/>
<circle cx="624.8" cy="542.4" r="1.1" fill="#A67A38" opacity="0.75"/>
<ellipse cx="665.9" cy="544.5" rx="5.3" ry="5.6" fill="url(#pc2)"/>
<ellipse cx="504.3" cy="544.9" rx="4.9" ry="5.4" fill="url(#pc2)"/>
<ellipse cx="525.2" cy="545.1" rx="5.4" ry="6.3" fill="url(#pc2)"/>
<ellipse cx="589.7" cy="545.4" rx="6.9" ry="5.0" fill="url(#pc)"/>
<ellipse cx="668.6" cy="545.6" rx="2.5" ry="2.3" fill="url(#pc)"/>
<circle cx="668.0" cy="544.0" r="1.3" fill="#A67A38" opacity="0.75"/>
<ellipse cx="616.8" cy="545.8" rx="7.4" ry="6.0" fill="url(#pc)"/>
<ellipse cx="649.3" cy="546.0" rx="4.7" ry="4.3" fill="url(#pc2)"/>
<ellipse cx="617.2" cy="546.0" rx="4.4" ry="4.2" fill="url(#pc2)"/>
<circle cx="616.4" cy="545.7" r="1.1" fill="#A67A38" opacity="0.75"/>
<ellipse cx="520.2" cy="546.1" rx="5.3" ry="3.7" fill="url(#pc)"/>
<ellipse cx="576.5" cy="546.3" rx="5.0" ry="4.1" fill="url(#pc)"/>
<circle cx="577.5" cy="545.5" r="1.1" fill="#A67A38" opacity="0.75"/>
<ellipse cx="664.5" cy="546.3" rx="3.6" ry="2.7" fill="url(#pc)"/>
<circle cx="663.4" cy="549.1" r="0.9" fill="#A67A38" opacity="0.75"/>
<ellipse cx="642.0" cy="546.4" rx="5.2" ry="4.9" fill="url(#pc)"/>
<ellipse cx="527.0" cy="546.4" rx="6.1" ry="6.3" fill="url(#pc)"/>
<ellipse cx="652.2" cy="546.6" rx="3.9" ry="2.9" fill="url(#pc2)"/>
<circle cx="650.3" cy="546.1" r="0.8" fill="#A67A38" opacity="0.75"/>
<ellipse cx="556.7" cy="546.7" rx="3.0" ry="2.7" fill="url(#pc)"/>
<ellipse cx="623.5" cy="547.0" rx="5.3" ry="4.8" fill="url(#pc2)"/>
<ellipse cx="575.7" cy="547.4" rx="5.7" ry="5.9" fill="url(#pc)"/>
<circle cx="577.4" cy="547.9" r="1.1" fill="#A67A38" opacity="0.75"/>
<ellipse cx="597.0" cy="547.6" rx="4.1" ry="5.0" fill="url(#pc)"/>
<ellipse cx="664.1" cy="547.6" rx="4.5" ry="4.7" fill="url(#pc2)"/>
<ellipse cx="661.8" cy="548.4" rx="2.4" ry="2.9" fill="url(#pc)"/>
<ellipse cx="660.7" cy="548.4" rx="5.0" ry="4.8" fill="url(#pc2)"/>
<ellipse cx="601.7" cy="548.6" rx="3.4" ry="3.7" fill="url(#pc)"/>
<ellipse cx="543.3" cy="549.0" rx="4.1" ry="4.3" fill="url(#pc2)"/>
<circle cx="544.8" cy="549.4" r="0.9" fill="#A67A38" opacity="0.75"/>
<ellipse cx="577.4" cy="549.1" rx="6.0" ry="5.0" fill="url(#pc2)"/>
<ellipse cx="523.6" cy="549.2" rx="3.5" ry="3.2" fill="url(#pc)"/>
<ellipse cx="515.2" cy="549.3" rx="4.3" ry="4.4" fill="url(#pc2)"/>
<ellipse cx="642.3" cy="549.4" rx="2.8" ry="3.0" fill="url(#pc2)"/>
<ellipse cx="576.9" cy="549.5" rx="3.7" ry="3.0" fill="url(#pc)"/>
<ellipse cx="569.5" cy="549.6" rx="4.6" ry="4.1" fill="url(#pc)"/>
<ellipse cx="534.7" cy="549.6" rx="6.0" ry="6.4" fill="url(#pc)"/>
<circle cx="534.5" cy="552.6" r="1.1" fill="#A67A38" opacity="0.75"/>
<ellipse cx="624.2" cy="549.7" rx="6.0" ry="5.6" fill="url(#pc2)"/>
<ellipse cx="587.3" cy="549.9" rx="7.1" ry="4.9" fill="url(#pc)"/>
<ellipse cx="521.9" cy="550.1" rx="5.1" ry="4.9" fill="url(#pc)"/>
<ellipse cx="534.0" cy="550.2" rx="5.2" ry="3.7" fill="url(#pc)"/>
<ellipse cx="543.4" cy="550.4" rx="6.9" ry="5.9" fill="url(#pc2)"/>
<ellipse cx="653.2" cy="550.4" rx="4.1" ry="3.8" fill="url(#pc)"/>
<ellipse cx="618.8" cy="550.5" rx="3.9" ry="4.5" fill="url(#pc)"/>
<ellipse cx="589.0" cy="550.6" rx="5.1" ry="6.0" fill="url(#pc2)"/>
<circle cx="589.1" cy="550.9" r="0.8" fill="#A67A38" opacity="0.75"/>
<ellipse cx="599.0" cy="550.7" rx="4.8" ry="4.4" fill="url(#pc)"/>
<circle cx="599.9" cy="552.0" r="0.9" fill="#A67A38" opacity="0.75"/>
<ellipse cx="541.7" cy="551.5" rx="5.0" ry="4.6" fill="url(#pc2)"/>
<ellipse cx="649.6" cy="551.7" rx="4.1" ry="4.1" fill="url(#pc)"/>
<ellipse cx="643.2" cy="551.9" rx="3.9" ry="4.6" fill="url(#pc)"/>
<ellipse cx="548.7" cy="551.9" rx="3.4" ry="4.0" fill="url(#pc)"/>
<circle cx="550.5" cy="553.0" r="1.1" fill="#A67A38" opacity="0.75"/>
<ellipse cx="594.8" cy="552.2" rx="3.7" ry="3.8" fill="url(#pc)"/>
<circle cx="592.0" cy="552.2" r="1.3" fill="#A67A38" opacity="0.75"/>
<ellipse cx="543.0" cy="552.2" rx="5.3" ry="4.6" fill="url(#pc)"/>
<ellipse cx="559.5" cy="552.3" rx="4.7" ry="3.6" fill="url(#pc2)"/>
<ellipse cx="531.6" cy="552.4" rx="5.4" ry="5.3" fill="url(#pc)"/>
<ellipse cx="559.6" cy="552.7" rx="4.6" ry="5.2" fill="url(#pc)"/>
<ellipse cx="626.7" cy="553.4" rx="3.9" ry="4.7" fill="url(#pc)"/>
<ellipse cx="547.1" cy="553.4" rx="4.0" ry="3.0" fill="url(#pc2)"/>
<ellipse cx="554.6" cy="553.7" rx="7.3" ry="6.3" fill="url(#pc)"/>
<ellipse cx="528.5" cy="554.0" rx="6.3" ry="5.7" fill="url(#pc2)"/>
<ellipse cx="567.5" cy="554.1" rx="6.3" ry="6.2" fill="url(#pc2)"/>
<circle cx="569.9" cy="556.5" r="0.9" fill="#A67A38" opacity="0.75"/>
<ellipse cx="535.2" cy="554.8" rx="3.4" ry="3.0" fill="url(#pc)"/>
<ellipse cx="600.4" cy="555.2" rx="3.9" ry="3.5" fill="url(#pc)"/>
<circle cx="601.4" cy="555.4" r="0.9" fill="#A67A38" opacity="0.75"/>
<ellipse cx="600.3" cy="555.4" rx="4.9" ry="5.0" fill="url(#pc)"/>
<ellipse cx="556.2" cy="555.6" rx="3.7" ry="4.5" fill="url(#pc)"/>
<ellipse cx="624.4" cy="555.6" rx="5.4" ry="3.7" fill="url(#pc2)"/>
<circle cx="624.2" cy="555.1" r="1.3" fill="#A67A38" opacity="0.75"/>
<ellipse cx="603.6" cy="555.6" rx="2.7" ry="3.0" fill="url(#pc)"/>
<circle cx="600.8" cy="556.6" r="1.1" fill="#A67A38" opacity="0.75"/>
<ellipse cx="627.3" cy="556.0" rx="3.5" ry="3.9" fill="url(#pc)"/>
<ellipse cx="637.4" cy="556.1" rx="4.0" ry="3.6" fill="url(#pc)"/>
<ellipse cx="572.6" cy="556.3" rx="3.7" ry="3.4" fill="url(#pc)"/>
<circle cx="573.2" cy="555.6" r="1.2" fill="#A67A38" opacity="0.75"/>
<ellipse cx="623.2" cy="556.5" rx="5.2" ry="4.9" fill="url(#pc)"/>
<ellipse cx="609.9" cy="556.5" rx="4.3" ry="3.9" fill="url(#pc)"/>
<ellipse cx="615.8" cy="556.9" rx="5.7" ry="5.9" fill="url(#pc)"/>
<circle cx="613.8" cy="555.4" r="1.2" fill="#A67A38" opacity="0.75"/>
<ellipse cx="621.0" cy="557.0" rx="5.1" ry="4.4" fill="url(#pc)"/>
<ellipse cx="625.4" cy="557.4" rx="3.0" ry="2.5" fill="url(#pc)"/>
<circle cx="627.6" cy="556.9" r="0.7" fill="#A67A38" opacity="0.75"/>
<ellipse cx="619.0" cy="557.9" rx="6.2" ry="6.4" fill="url(#pc2)"/>
<ellipse cx="632.0" cy="558.1" rx="3.9" ry="4.1" fill="url(#pc2)"/>
<ellipse cx="587.7" cy="558.6" rx="8.1" ry="5.9" fill="url(#pc)"/>
<ellipse cx="592.3" cy="558.8" rx="4.9" ry="4.6" fill="url(#pc)"/>
<ellipse cx="557.8" cy="559.3" rx="6.7" ry="5.2" fill="url(#pc2)"/>
<circle cx="559.5" cy="559.8" r="1.2" fill="#A67A38" opacity="0.75"/>
<ellipse cx="572.0" cy="559.9" rx="6.9" ry="5.4" fill="url(#pc)"/>
<circle cx="569.5" cy="560.1" r="0.9" fill="#A67A38" opacity="0.75"/>
<ellipse cx="594.9" cy="560.0" rx="3.3" ry="3.9" fill="url(#pc2)"/>
<circle cx="592.5" cy="562.6" r="0.9" fill="#A67A38" opacity="0.75"/>
<ellipse cx="591.8" cy="560.1" rx="4.0" ry="3.4" fill="url(#pc)"/>
<ellipse cx="582.2" cy="560.4" rx="5.9" ry="4.7" fill="url(#pc)"/>
<ellipse cx="554.3" cy="561.4" rx="2.9" ry="3.0" fill="url(#pc2)"/>
<ellipse cx="589.5" cy="561.5" rx="5.6" ry="4.3" fill="url(#pc2)"/>
<ellipse cx="613.5" cy="562.0" rx="4.2" ry="3.2" fill="url(#pc)"/>
<circle cx="613.5" cy="562.7" r="0.8" fill="#A67A38" opacity="0.75"/>
<ellipse cx="583.8" cy="562.1" rx="3.8" ry="4.0" fill="url(#pc)"/>
<circle cx="585.9" cy="562.3" r="0.8" fill="#A67A38" opacity="0.75"/>
<ellipse cx="582.1" cy="562.5" rx="6.6" ry="4.9" fill="url(#pc)"/>
<ellipse cx="588.8" cy="562.9" rx="6.0" ry="4.8" fill="url(#pc)"/>
<ellipse cx="567.5" cy="563.4" rx="4.9" ry="4.5" fill="url(#pc2)"/>
<ellipse cx="578.2" cy="563.7" rx="5.0" ry="4.7" fill="url(#pc)"/>
<ellipse cx="585.4" cy="564.0" rx="5.2" ry="6.1" fill="url(#pc)"/>
<ellipse cx="593.7" cy="564.2" rx="7.8" ry="5.6" fill="url(#pc2)"/>
<clipPath id="bk"><path d="M493.5 541 Q587 590 681 541 L648.7 673 Q588 715 527.1 671 Z"/></clipPath>
<g clip-path="url(#bk)">
<rect x="480" y="530" width="215" height="180" fill="#F3F3F3"/>
<path d="M573.7 530 L590.0 530 L589.7 710 L579.1 710 Z" fill="#D8283A"/>
<path d="M606.3 530 L621.9 530 L610.4 710 L600.2 710 Z" fill="#D8283A"/>
<path d="M636.5 530 L649.6 530 L628.3 710 L619.8 710 Z" fill="#D8283A"/>
<path d="M660.8 530 L669.8 530 L641.4 710 L635.6 710 Z" fill="#D8283A"/>
<path d="M676.2 530 L680.0 530 L648.1 710 L645.6 710 Z" fill="#D8283A"/>
<path d="M493.6 530 L495.5 530 L528.4 710 L527.1 710 Z" fill="#D8283A"/>
<path d="M500.2 530 L507.5 530 L536.2 710 L531.4 710 Z" fill="#D8283A"/>
<path d="M517.3 530 L529.2 530 L550.2 710 L542.5 710 Z" fill="#D8283A"/>
<path d="M542.8 530 L557.8 530 L568.8 710 L559.1 710 Z" fill="#D8283A"/>
<linearGradient id="bsh" x1="0" x2="1"><stop offset="0" stop-color="#FFFFFF" stop-opacity="0.35"/><stop offset="0.15" stop-color="#FFFFFF" stop-opacity="0"/><stop offset="0.85" stop-color="#000" stop-opacity="0"/><stop offset="1" stop-color="#000" stop-opacity="0.10"/></linearGradient>
<rect x="490" y="530" width="195" height="180" fill="url(#bsh)"/>
</g>
<path d="M493 541.5 Q587 589 681.5 541.5" fill="none" stroke="#F4F4F4" stroke-width="4.5"/>
<path d="M493 544 Q587 592 681.5 544" fill="none" stroke="#DADADA" stroke-width="0.8" opacity="0.6"/></g></defs>
<use href="#slide" transform="translate(0 0.4)"/>
<rect x="53.2" y="295.9" width="91.6" height="54.9" rx="8" fill="#FFFFFF" stroke="#B8462A" stroke-width="4.2"/>
<use href="#slide" transform="matrix(0.1015 0 0 0.1033 37.46 262.14)"/>
<rect x="1084.5" y="335.5" width="92" height="34" fill="#FFFFFF" stroke="#ADADAD" stroke-width="1"/>
<rect x="1181.5" y="335.5" width="85" height="34" fill="#FFFFFF" stroke="#ADADAD" stroke-width="1"/>
<rect x="1488.1" y="341.7" width="25.9" height="21.2" fill="#FFFFFF"/><rect x="1518" y="341.7" width="26" height="21.2" fill="#FFFFFF"/>
<g fill="none" stroke="#262626" stroke-width="1.5"><path d="M1457.4 295.6 L1467.3 305.4 L1477 295.6"/><path d="M1522 292.7 L1536.3 307 M1536.3 292.7 L1522 307"/><path d="M1493.4 354.9 L1500.3 347.8 L1507.2 354.9"/><path d="M1523.4 349.3 L1530.3 356.2 L1537.2 349.3"/></g>
<g fill="none" stroke="#3A3A3A" stroke-width="1.5"><path d="M1477.7 409.6 A11.5 11.5 0 0 1 1500.3 409.6"/><circle cx="1489" cy="410.2" r="3.3"/><path d="M1477.7 444.4 A11.5 11.5 0 0 1 1500.3 444.4"/><circle cx="1489" cy="445" r="3.3"/><path d="M1477.7 479.6 A11.5 11.5 0 0 1 1481.4 471.4 M1486.3 468.8 A11.5 11.5 0 0 1 1500.3 479.6"/><path d="M1486 477.7 A3.3 3.3 0 0 0 1491.6 482.4"/><path d="M1477.6 466 L1500.1 488"/></g>
<circle cx="1488.6" cy="482.1" r="25.3" fill="none" stroke="#000000" stroke-width="3.9"/>
<path d="M1490.6 528 V700" stroke="#000000" stroke-width="4.2"/>
<path d="M1490.7 512.8 L1498.5 535.8 L1490.7 532.5 L1482.9 535.8 Z" fill="#000000"/>
<rect x="1041.5" y="927" width="25" height="45.5" rx="12.5" fill="#F3F3F3"/>
<path d="M1053.7 933.8 L1060.2 942.8 H1047.2 Z" fill="#777777"/><path d="M1053.7 966 L1060.2 957 H1047.2 Z" fill="#777777"/>
<rect x="1011.8" y="973" width="60.4" height="32" fill="#E0E0E0"/>
<g fill="none" stroke="#262626" stroke-width="1.5">
<path d="M131.9 998.2 H124.9 V981.6 H131.5 Q134.1 981.6 134.3 984.5 V992.7 M134.3 984.5 Q134.5 981.6 137 981.6 H143.3 V989.9"/><path d="M132.4 995.2 L137.4 999.6 L144.8 992.1"/>
<path d="M787 988.8 H811 M787 995.1 H811 M787 1001 H811 M794.1 984 L799 979 L803.9 984"/>
<path d="M884 980 H904 V994 H892.6 L887.2 999.2 V994 H884 Z"/>
<rect x="1031.7" y="981" width="20.4" height="17.5"/><path d="M1036.4 981 V998.5 M1036.4 993.5 H1052.1"/><rect x="1040.8" y="985.6" width="6.8" height="3.8"/>
<rect x="1092" y="981" width="8" height="6.8"/><rect x="1104" y="981" width="8" height="6.8"/><rect x="1092" y="992.2" width="8" height="6.4"/><rect x="1104" y="992.2" width="8" height="6.4"/>
<path d="M1152 980.5 H1158 Q1161 980.5 1161 983 Q1161 980.5 1164 980.5 H1170.3 V997.3 H1163 L1161 999 L1159 997.3 H1152 Z M1161 983 V997"/><path d="M1154.5 984.5 H1158.5 M1154.5 987.2 H1158.5 M1154.5 989.9 H1158.5 M1154.5 992.6 H1158.5 M1163.5 984.5 H1167.5 M1163.5 987.2 H1167.5 M1163.5 989.9 H1167.5 M1163.5 992.6 H1167.5" stroke-width="1.3"/>
<path d="M1211.5 980.2 H1231.1 M1213.6 980.2 V990.6 H1229.2 V980.2 M1218 984.7 H1225.5 M1221.3 990.6 V998 M1215.8 998 H1226.6"/>
<path d="M1260 989.4 H1271.1 M1435.8 989.4 H1447.3 M1441.55 983.6 V995.1"/>
<rect x="1521.5" y="984.8" width="9.6" height="9.4"/><path d="M1522.6 981.6 L1526.3 978.2 L1530 981.6 M1522.6 997 L1526.3 1000.4 L1530 997 M1518.6 985.7 L1515.8 989.4 L1518.6 993.1 M1534 985.7 L1536.8 989.4 L1534 993.1"/>
</g>
<path d="M1279.8 989.9 H1428.1" stroke="#5A5A5A" stroke-width="2"/><path d="M1353.8 985.9 V993.8" stroke="#5A5A5A" stroke-width="1.5"/><rect x="1306" y="981.1" width="7.9" height="16.9" fill="#5A5A5A"/>
<g fill="none" stroke="#262626" stroke-width="1.3" stroke-linejoin="round" stroke-linecap="round"><circle cx="317.5" cy="982.8" r="2.4"/><path d="M321.4 988 L325.5 986.3 Q327.3 985.2 326.5 983.8 Q325.7 982.6 324 983.2 L320 984.8 Q317.5 985.7 315 984.8 L311 983.2 Q309.3 982.6 308.5 983.8 Q307.7 985.2 309.5 986.3 L313.3 987.8 V992 L311.9 997.3 Q311.6 999 313.2 999.1 Q314.6 999.2 315 997.8 L317.4 993.4 L318.8 996"/><path d="M319.6 990.4 L328.8 999.6 M328.8 990.4 L319.6 999.6"/></g>
<rect x="102" y="111" width="57" height="3" rx="1.5" fill="#C43E1C"/>
<text x="343.96" y="45.30" font-size="18.75" fill="#FFFFFF" textLength="108.50" lengthAdjust="spacingAndGlyphs" style="">Presentation1</text>
<text x="463.47" y="45.30" font-size="18.80" fill="#FFFFFF" textLength="6.96" lengthAdjust="spacingAndGlyphs" style="">-</text>
<text x="479.14" y="45.30" font-size="18.75" fill="#FFFFFF" textLength="71.98" lengthAdjust="spacingAndGlyphs" style="">PowerP...</text>
<text x="661.15" y="45.60" font-size="19.19" fill="#A8432B" textLength="59.57" lengthAdjust="spacingAndGlyphs" style="">Search</text>
<text x="1154.29" y="45.20" font-size="18.90" fill="#FFFFFF" textLength="122.41" lengthAdjust="spacingAndGlyphs" style="">Daniel Uchenna</text>
<text x="1297.72" y="44.20" font-size="15.70" fill="#FFFFFF" textLength="22.48" lengthAdjust="spacingAndGlyphs" style="">DU</text>
<text x="32.87" y="105.10" font-size="20.06" fill="#2C2C2C" textLength="32.01" lengthAdjust="spacingAndGlyphs" style="">File</text>
<text x="100.62" y="105.10" font-size="20.06" fill="#2C2C2C" textLength="57.74" lengthAdjust="spacingAndGlyphs" style="stroke:#262626;stroke-width:0.55px;">Home</text>
<text x="186.01" y="105.10" font-size="20.06" fill="#2C2C2C" textLength="48.43" lengthAdjust="spacingAndGlyphs" style="">Insert</text>
<text x="264.08" y="105.10" font-size="20.06" fill="#2C2C2C" textLength="45.97" lengthAdjust="spacingAndGlyphs" style="">Draw</text>
<text x="338.07" y="105.10" font-size="20.06" fill="#2C2C2C" textLength="61.82" lengthAdjust="spacingAndGlyphs" style="">Design</text>
<text x="429.77" y="105.10" font-size="20.06" fill="#2C2C2C" textLength="93.22" lengthAdjust="spacingAndGlyphs" style="">Transitions</text>
<text x="554.26" y="105.10" font-size="20.06" fill="#2C2C2C" textLength="99.26" lengthAdjust="spacingAndGlyphs" style="">Animations</text>
<text x="683.12" y="105.10" font-size="20.06" fill="#2C2C2C" textLength="97.34" lengthAdjust="spacingAndGlyphs" style="">Slide Show</text>
<text x="808.33" y="105.10" font-size="20.06" fill="#2C2C2C" textLength="61.70" lengthAdjust="spacingAndGlyphs" style="">Record</text>
<text x="898.49" y="105.10" font-size="20.06" fill="#2C2C2C" textLength="60.37" lengthAdjust="spacingAndGlyphs" style="">Review</text>
<text x="989.52" y="105.10" font-size="20.06" fill="#2C2C2C" textLength="40.44" lengthAdjust="spacingAndGlyphs" style="">View</text>
<text x="1059.65" y="105.10" font-size="20.06" fill="#2C2C2C" textLength="41.40" lengthAdjust="spacingAndGlyphs" style="">Help</text>
<text x="1459.65" y="103.30" font-size="19.19" fill="#FFFFFF" textLength="49.98" lengthAdjust="spacingAndGlyphs" style="">Share</text>
<text x="41.65" y="201.30" font-size="18.46" fill="#2C2C2C" textLength="41.98" lengthAdjust="spacingAndGlyphs" style="">Paste</text>
<text x="47.37" y="259.50" font-size="15.55" fill="#2C2C2C" textLength="69.68" lengthAdjust="spacingAndGlyphs" style="">Clipboard</text>
<text x="193.87" y="199.30" font-size="17.73" fill="#2C2C2C" textLength="34.89" lengthAdjust="spacingAndGlyphs" style="">New</text>
<text x="184.11" y="221.30" font-size="17.73" fill="#2C2C2C" textLength="38.66" lengthAdjust="spacingAndGlyphs" style="">Slide</text>
<text x="221.71" y="259.50" font-size="15.55" fill="#2C2C2C" textLength="41.13" lengthAdjust="spacingAndGlyphs" style="">Slides</text>
<text x="571.79" y="150.00" font-size="17.30" fill="#B3B3B3" textLength="20.03" lengthAdjust="spacingAndGlyphs" style="">24</text>
<text x="454.50" y="259.50" font-size="15.55" fill="#2C2C2C" textLength="31.82" lengthAdjust="spacingAndGlyphs" style="">Font</text>
<text x="736.54" y="259.50" font-size="15.55" fill="#2C2C2C" textLength="71.96" lengthAdjust="spacingAndGlyphs" style="">Paragraph</text>
<text x="936.73" y="199.30" font-size="17.88" fill="#2C2C2C" textLength="57.28" lengthAdjust="spacingAndGlyphs" style="">Shapes</text>
<text x="1004.27" y="199.30" font-size="17.88" fill="#2C2C2C" textLength="63.33" lengthAdjust="spacingAndGlyphs" style="">Arrange</text>
<text x="1085.87" y="199.30" font-size="17.88" fill="#A6A6A6" textLength="44.80" lengthAdjust="spacingAndGlyphs" style="">Quick</text>
<text x="1076.95" y="223.20" font-size="18.31" fill="#A6A6A6" textLength="45.05" lengthAdjust="spacingAndGlyphs" style="">Styles</text>
<text x="1027.34" y="259.50" font-size="15.55" fill="#2C2C2C" textLength="60.73" lengthAdjust="spacingAndGlyphs" style="">Drawing</text>
<text x="1229.31" y="196.60" font-size="18.31" fill="#2C2C2C" textLength="55.67" lengthAdjust="spacingAndGlyphs" style="">Editing</text>
<text x="1314.26" y="199.00" font-size="18.60" fill="#2C2C2C" textLength="62.81" lengthAdjust="spacingAndGlyphs" style="">Add-ins</text>
<text x="1318.37" y="259.80" font-size="15.41" fill="#2C2C2C" textLength="53.70" lengthAdjust="spacingAndGlyphs" style="">Add-ins</text>
<text x="20.05" y="311.80" font-size="21.37" fill="#C43E1C" textLength="10.58" lengthAdjust="spacingAndGlyphs" style="">1</text>
<text x="190.58" y="955.20" font-size="23.55" fill="#616161" textLength="175.72" lengthAdjust="spacingAndGlyphs" style="">Click to add notes</text>
<text x="1083.64" y="312.80" font-size="30.81" fill="#262626" textLength="123.10" lengthAdjust="spacingAndGlyphs" style="">Selection</text>
<text x="1095.58" y="360.80" font-size="20.20" fill="#2C2C2C" textLength="70.23" lengthAdjust="spacingAndGlyphs" style="">Show All</text>
<text x="1191.46" y="360.80" font-size="20.20" fill="#2C2C2C" textLength="64.49" lengthAdjust="spacingAndGlyphs" style="">Hide All</text>
<text x="1107.71" y="416.40" font-size="19.19" fill="#2C2C2C" textLength="59.40" lengthAdjust="spacingAndGlyphs" style="">Heart 7</text>
<text x="1107.75" y="451.10" font-size="19.19" fill="#2C2C2C" textLength="69.52" lengthAdjust="spacingAndGlyphs" style="">Picture 6</text>
<text x="1107.76" y="485.90" font-size="19.19" fill="#2C2C2C" textLength="69.25" lengthAdjust="spacingAndGlyphs" style="">Picture 4</text>
<text x="1239.07" y="730.40" font-size="33.14" fill="#000000" textLength="259.19" lengthAdjust="spacingAndGlyphs" style="font-weight:bold;">Picture 4 hidden</text>
<text x="17.70" y="996.20" font-size="16.28" fill="#333333" textLength="77.56" lengthAdjust="spacingAndGlyphs" style="">Slide 1 of 1</text>
<text x="169.21" y="996.20" font-size="16.28" fill="#333333" textLength="116.27" lengthAdjust="spacingAndGlyphs" style="">English (Nigeria)</text>
<text x="334.61" y="996.20" font-size="16.28" fill="#262626" textLength="188.33" lengthAdjust="spacingAndGlyphs" style="font-weight:bold;">Accessibility: Investigate</text>
<text x="813.60" y="996.00" font-size="15.70" fill="#333333" textLength="41.27" lengthAdjust="spacingAndGlyphs" style="">Notes</text>
<text x="908.70" y="996.00" font-size="15.70" fill="#333333" textLength="75.97" lengthAdjust="spacingAndGlyphs" style="">Comments</text>
<text x="1465.64" y="996.10" font-size="15.41" fill="#333333" textLength="31.52" lengthAdjust="spacingAndGlyphs" style="">44%</text>
<text x="341.70" y="187.50" font-size="20.49" fill="#8F8F8F" textLength="12.91" lengthAdjust="spacingAndGlyphs" style="font-weight:bold;">B</text>
<text x="418.14" y="187.50" font-size="20.49" fill="#8F8F8F" textLength="14.62" lengthAdjust="spacingAndGlyphs" style="">U</text>
<text x="458.15" y="187.50" font-size="20.49" fill="#D0D0D0" textLength="12.80" lengthAdjust="spacingAndGlyphs" style="font-weight:bold;">S</text>
<text x="457.46" y="186.80" font-size="20.64" fill="#8F8F8F" textLength="12.58" lengthAdjust="spacingAndGlyphs" style="font-weight:bold;">S</text>
<text x="492.63" y="188.80" font-size="19.91" fill="#A3A3A3" textLength="22.73" lengthAdjust="spacingAndGlyphs" style="">ab</text>
<text x="531.16" y="183.70" font-size="19.04" fill="#8F8F8F" textLength="23.91" lengthAdjust="spacingAndGlyphs" style="">AV</text>
<text x="402.16" y="225.50" font-size="23.11" fill="#8F8F8F" textLength="13.98" lengthAdjust="spacingAndGlyphs" style="">A</text>
<text x="458.66" y="228.50" font-size="20.64" fill="#8F8F8F" textLength="12.27" lengthAdjust="spacingAndGlyphs" style="">A</text>
<text x="473.31" y="228.50" font-size="20.64" fill="#8F8F8F" textLength="9.09" lengthAdjust="spacingAndGlyphs" style="">a</text>
<text x="526.65" y="228.60" font-size="27.62" fill="#8F8F8F" textLength="16.30" lengthAdjust="spacingAndGlyphs" style="">A</text>
<text x="568.26" y="228.60" font-size="21.51" fill="#8F8F8F" textLength="12.47" lengthAdjust="spacingAndGlyphs" style="">A</text>
<text x="607.36" y="228.60" font-size="27.62" fill="#8F8F8F" textLength="12.88" lengthAdjust="spacingAndGlyphs" style="">A</text>
<text x="381.5" y="187.5" font-size="21" fill="#8F8F8F" style="font-family:'Liberation Serif';font-style:italic">I</text>
<text x="727.96" y="136.40" font-size="8.30" fill="#A6A6A6" textLength="4.64" lengthAdjust="spacingAndGlyphs" style="">1</text>
<text x="727.54" y="145.40" font-size="8.30" fill="#A6A6A6" textLength="5.13" lengthAdjust="spacingAndGlyphs" style="">2</text>
<text x="727.66" y="154.40" font-size="8.30" fill="#A6A6A6" textLength="4.93" lengthAdjust="spacingAndGlyphs" style="">3</text>
<text x="868.27" y="142.90" font-size="16.13" fill="#A6A6A6" textLength="10.06" lengthAdjust="spacingAndGlyphs" style="">A</text>
</svg>
</body></html>
